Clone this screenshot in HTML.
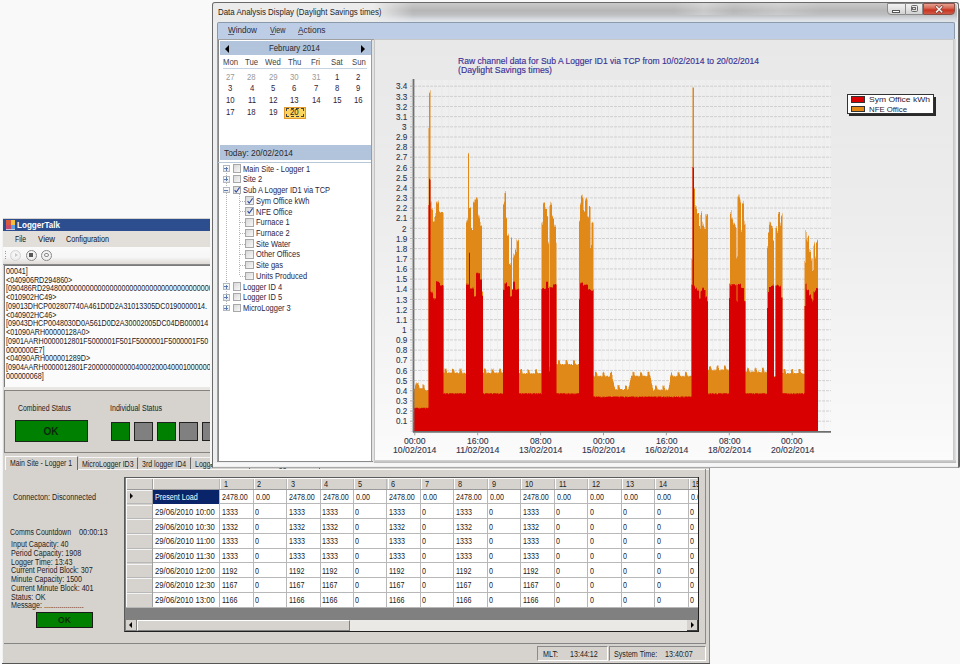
<!DOCTYPE html><html><head><meta charset="utf-8"><style>
html,body{margin:0;padding:0}
body{width:960px;height:664px;overflow:hidden;position:relative;background:#f9f9f9;font-family:"Liberation Sans",sans-serif}
div,span{position:absolute}
.t{white-space:nowrap;transform-origin:0 50%}
</style></head><body>
<div style="left:2px;top:218px;width:707.5px;height:446px;background:#d6d3ce;border-left:1px solid #f2f2f2;border-right:1px solid #858585;box-sizing:border-box"></div>
<div style="left:3px;top:218.5px;width:706px;height:12px;background:#2c4d8e"></div>
<div style="left:5.5px;top:219.8px;width:9.5px;height:10px;background:#c8c8d8"></div>
<div style="left:6px;top:220.3px;width:4.5px;height:4.5px;background:#d85a3a"></div>
<div style="left:10.5px;top:220.3px;width:4.5px;height:4.5px;background:#f2c040"></div>
<div style="left:6px;top:224.8px;width:4.5px;height:4.5px;background:#c84a6a"></div>
<div style="left:10.5px;top:224.8px;width:4.5px;height:4.5px;background:#5aa0e0"></div>
<span class="t" style="left:17.00px;top:220.46px;font-size:9.5px;line-height:9.5px;color:#fff;font-weight:bold;transform:scaleX(0.8516);">LoggerTalk</span>
<div style="left:3px;top:230.5px;width:706px;height:17px;background:#e2dfdb"></div>
<span class="t" style="left:15.00px;top:235.48px;font-size:8.5px;line-height:8.5px;color:#111;transform:scaleX(0.8032);">File</span>
<span class="t" style="left:38.00px;top:235.48px;font-size:8.5px;line-height:8.5px;color:#111;transform:scaleX(0.9305);">View</span>
<span class="t" style="left:66.00px;top:235.48px;font-size:8.5px;line-height:8.5px;color:#111;transform:scaleX(0.8505);">Configuration</span>
<div style="left:3px;top:247px;width:706px;height:17.5px;background:linear-gradient(#fafafa 0,#f6f6f6 60%,#dedad6 100%);border-bottom:1px solid #8a8a8a;box-sizing:border-box"></div>
<div style="left:5.2px;top:250.5px;width:1px;height:1px;background:#9a9a9a"></div>
<div style="left:5.2px;top:253.1px;width:1px;height:1px;background:#9a9a9a"></div>
<div style="left:5.2px;top:255.7px;width:1px;height:1px;background:#9a9a9a"></div>
<div style="left:5.2px;top:258.3px;width:1px;height:1px;background:#9a9a9a"></div>
<div style="left:10.2px;top:249.9px;width:10.8px;height:10.8px;border-radius:50%;border:1px solid #d4d4d4;background:radial-gradient(circle at 50% 40%,#fcfcfc,#e6e6e6);box-sizing:border-box"></div>
<div style="left:25.799999999999997px;top:249.9px;width:10.8px;height:10.8px;border-radius:50%;border:1px solid #8a8a8a;background:radial-gradient(circle at 50% 40%,#fcfcfc,#e6e6e6);box-sizing:border-box"></div>
<div style="left:41.2px;top:249.9px;width:10.8px;height:10.8px;border-radius:50%;border:1px solid #8a8a8a;background:radial-gradient(circle at 50% 40%,#fcfcfc,#e6e6e6);box-sizing:border-box"></div>
<div style="left:14.6px;top:253.3px;width:0px;height:0px;border-left:3px solid #c8c8c8;border-top:2px solid transparent;border-bottom:2px solid transparent;background:none"></div>
<div style="left:29.1px;top:253.2px;width:4.2px;height:4.2px;background:#575757"></div>
<div style="left:43.9px;top:252.6px;width:5.6px;height:4.2px;border:1px solid #8a8a8a;border-radius:2px;box-sizing:border-box"></div>
<div style="left:4px;top:264.5px;width:208px;height:123px;background:#fbfbfb;border-top:1px solid #7a7a7a;border-left:1px solid #7a7a7a;box-sizing:border-box"></div>
<span class="t" style="left:6.00px;top:266.93px;font-size:8.6px;line-height:8.6px;color:#202020;transform:scaleX(0.8300);">00041]</span>
<span class="t" style="left:6.00px;top:275.68px;font-size:8.6px;line-height:8.6px;color:#202020;transform:scaleX(0.8300);">&lt;040906RD294860&gt;</span>
<span class="t" style="left:6.00px;top:284.43px;font-size:8.6px;line-height:8.6px;color:#202020;transform:scaleX(0.8300);">[090486RD2948000000000000000000000000000000000000000000</span>
<span class="t" style="left:6.00px;top:293.18px;font-size:8.6px;line-height:8.6px;color:#202020;transform:scaleX(0.8300);">&lt;010902HC49&gt;</span>
<span class="t" style="left:6.00px;top:301.93px;font-size:8.6px;line-height:8.6px;color:#202020;transform:scaleX(0.8300);">[09013DHCP002807740A461D0D2A31013305DC0190000014.</span>
<span class="t" style="left:6.00px;top:310.68px;font-size:8.6px;line-height:8.6px;color:#202020;transform:scaleX(0.8300);">&lt;040902HC46&gt;</span>
<span class="t" style="left:6.00px;top:319.43px;font-size:8.6px;line-height:8.6px;color:#202020;transform:scaleX(0.8300);">[09043DHCP0048030D0A561D0D2A30002005DC04DB000014</span>
<span class="t" style="left:6.00px;top:328.18px;font-size:8.6px;line-height:8.6px;color:#202020;transform:scaleX(0.8300);">&lt;01090ARH00000128A0&gt;</span>
<span class="t" style="left:6.00px;top:336.93px;font-size:8.6px;line-height:8.6px;color:#202020;transform:scaleX(0.8300);">[0901AARH0000012801F5000001F501F5000001F5000001F50</span>
<span class="t" style="left:6.00px;top:345.68px;font-size:8.6px;line-height:8.6px;color:#202020;transform:scaleX(0.8300);">0000000E7]</span>
<span class="t" style="left:6.00px;top:354.43px;font-size:8.6px;line-height:8.6px;color:#202020;transform:scaleX(0.8300);">&lt;04090ARH000001289D&gt;</span>
<span class="t" style="left:6.00px;top:363.18px;font-size:8.6px;line-height:8.6px;color:#202020;transform:scaleX(0.8300);">[0904AARH0000012801F2000000000004000200040001000000</span>
<span class="t" style="left:6.00px;top:371.93px;font-size:8.6px;line-height:8.6px;color:#202020;transform:scaleX(0.8300);">000000068]</span>
<div style="left:3.5px;top:387px;width:208px;height:3px;background:#e9e7e4"></div>
<div style="left:3.5px;top:390px;width:210px;height:63px;border:1px solid #858280;border-right:none;box-sizing:border-box"></div>
<span class="t" style="left:17.80px;top:404.28px;font-size:8.5px;line-height:8.5px;color:#222;transform:scaleX(0.8129);">Combined Status</span>
<span class="t" style="left:109.60px;top:404.08px;font-size:8.5px;line-height:8.5px;color:#222;transform:scaleX(0.8338);">Individual Status</span>
<div style="left:14.6px;top:420px;width:73px;height:22px;background:#008000;border:1px solid #1a2a1a;box-sizing:border-box"></div>
<span class="t" style="left:43.50px;top:427.20px;font-size:10px;line-height:10px;color:#0a2a0a;font-weight:bold;transform:scaleX(1.0000);">OK</span>
<div style="left:111.3px;top:422px;width:19px;height:18.5px;background:#008000;border:1px solid #222;box-sizing:border-box"></div>
<div style="left:134.0px;top:422px;width:19px;height:18.5px;background:#808080;border:1px solid #222;box-sizing:border-box"></div>
<div style="left:156.7px;top:422px;width:19px;height:18.5px;background:#008000;border:1px solid #222;box-sizing:border-box"></div>
<div style="left:179.39999999999998px;top:422px;width:19px;height:18.5px;background:#808080;border:1px solid #222;box-sizing:border-box"></div>
<div style="left:202.1px;top:422px;width:19px;height:18.5px;background:#808080;border:1px solid #222;box-sizing:border-box"></div>
<div style="left:3px;top:454px;width:706px;height:16px;background:#d6d3ce"></div>
<div style="left:5px;top:455.7px;width:73px;height:14px;background:#d6d3ce;border-top:1px solid #fafafa;border-left:1px solid #fafafa;border-right:1.2px solid #6a6a6a;box-sizing:border-box"></div>
<span class="t" style="left:10.00px;top:459.28px;font-size:8.5px;line-height:8.5px;color:#222;transform:scaleX(0.8101);">Main Site - Logger 1</span>
<div style="left:79px;top:456.8px;width:59px;height:12.5px;border-top:1px solid #f4f4f4;border-right:1.2px solid #6a6a6a;box-sizing:border-box"></div>
<span class="t" style="left:81.50px;top:460.38px;font-size:8.5px;line-height:8.5px;color:#222;transform:scaleX(0.8200);">MicroLogger ID3</span>
<div style="left:139px;top:456.8px;width:52px;height:12.5px;border-top:1px solid #f4f4f4;border-right:1.2px solid #6a6a6a;box-sizing:border-box"></div>
<span class="t" style="left:141.50px;top:460.38px;font-size:8.5px;line-height:8.5px;color:#222;transform:scaleX(0.8200);">3rd logger ID4</span>
<div style="left:192px;top:456.8px;width:58px;height:12.5px;border-top:1px solid #f4f4f4;border-right:1.2px solid #6a6a6a;box-sizing:border-box"></div>
<span class="t" style="left:194.50px;top:460.38px;font-size:8.5px;line-height:8.5px;color:#222;transform:scaleX(0.8200);">Logger ID5</span>
<div style="left:251px;top:456.8px;width:69px;height:12.5px;border-top:1px solid #f4f4f4;border-right:1.2px solid #6a6a6a;box-sizing:border-box"></div>
<span class="t" style="left:253.50px;top:460.38px;font-size:8.5px;line-height:8.5px;color:#222;transform:scaleX(0.8200);">MicroLogger</span>
<div style="left:78px;top:469px;width:631px;height:1px;background:#f8f8f8"></div>
<div style="left:704.9px;top:469px;width:1px;height:174px;background:#8a8a8a"></div>
<span class="t" style="left:13.00px;top:492.68px;font-size:8.5px;line-height:8.5px;color:#222;transform:scaleX(0.8527);">Connecton: Disconnected</span>
<span class="t" style="left:9.50px;top:528.18px;font-size:8.5px;line-height:8.5px;color:#222;transform:scaleX(0.8173);">Comms Countdown</span>
<span class="t" style="left:79.00px;top:528.18px;font-size:8.5px;line-height:8.5px;color:#222;transform:scaleX(0.8615);">00:00:13</span>
<span class="t" style="left:10.50px;top:540.18px;font-size:8.5px;line-height:8.5px;color:#222;transform:scaleX(0.8400);">Input Capacity: 40</span>
<span class="t" style="left:10.50px;top:548.91px;font-size:8.5px;line-height:8.5px;color:#222;transform:scaleX(0.8400);">Period Capacity: 1908</span>
<span class="t" style="left:10.50px;top:557.64px;font-size:8.5px;line-height:8.5px;color:#222;transform:scaleX(0.8400);">Logger Time: 13:43</span>
<span class="t" style="left:10.50px;top:566.37px;font-size:8.5px;line-height:8.5px;color:#222;transform:scaleX(0.8400);">Current Period Block: 307</span>
<span class="t" style="left:10.50px;top:575.10px;font-size:8.5px;line-height:8.5px;color:#222;transform:scaleX(0.8400);">Minute Capacity: 1500</span>
<span class="t" style="left:10.50px;top:583.83px;font-size:8.5px;line-height:8.5px;color:#222;transform:scaleX(0.8400);">Current Minute Block: 401</span>
<span class="t" style="left:10.50px;top:592.56px;font-size:8.5px;line-height:8.5px;color:#222;transform:scaleX(0.8400);">Status: OK</span>
<span class="t" style="left:10.50px;top:601.29px;font-size:8.5px;line-height:8.5px;color:#222;transform:scaleX(0.8400);">Message: ....................</span>
<div style="left:35.8px;top:611.5px;width:57px;height:16.5px;background:#008000;border:1px solid #1a1a1a;box-sizing:border-box"></div>
<span class="t" style="left:57.89px;top:616.22px;font-size:9px;line-height:9px;color:#0a2a0a;font-weight:bold;transform:scaleX(0.9500);">OK</span>
<div style="left:124.3px;top:476.7px;width:574.7px;height:155px;background:#808080;border-top:1.5px solid #5a5a5a;border-left:1.5px solid #5a5a5a;border-right:1px solid #fff;border-bottom:1px solid #202020;box-sizing:border-box"></div>
<div style="left:126px;top:478px;width:572px;height:11.2px;background:#d6d3ce"></div>
<div style="left:126px;top:478px;width:26.3px;height:129px;background:#d6d3ce"></div>
<div style="left:152.3px;top:489.2px;width:546px;height:117.8px;background:#fff"></div>
<div style="left:126px;top:503.43px;width:572px;height:1px;background:#b8b8b8"></div>
<div style="left:126px;top:518.16px;width:572px;height:1px;background:#b8b8b8"></div>
<div style="left:126px;top:532.89px;width:572px;height:1px;background:#b8b8b8"></div>
<div style="left:126px;top:547.62px;width:572px;height:1px;background:#b8b8b8"></div>
<div style="left:126px;top:562.35px;width:572px;height:1px;background:#b8b8b8"></div>
<div style="left:126px;top:577.0799999999999px;width:572px;height:1px;background:#b8b8b8"></div>
<div style="left:126px;top:591.81px;width:572px;height:1px;background:#b8b8b8"></div>
<div style="left:126px;top:606.54px;width:572px;height:1px;background:#b8b8b8"></div>
<div style="left:219.1px;top:478px;width:1px;height:129px;background:#b8b8b8"></div>
<div style="left:252.57px;top:478px;width:1px;height:129px;background:#b8b8b8"></div>
<div style="left:286.03999999999996px;top:478px;width:1px;height:129px;background:#b8b8b8"></div>
<div style="left:319.51px;top:478px;width:1px;height:129px;background:#b8b8b8"></div>
<div style="left:352.98px;top:478px;width:1px;height:129px;background:#b8b8b8"></div>
<div style="left:386.45px;top:478px;width:1px;height:129px;background:#b8b8b8"></div>
<div style="left:419.91999999999996px;top:478px;width:1px;height:129px;background:#b8b8b8"></div>
<div style="left:453.39px;top:478px;width:1px;height:129px;background:#b8b8b8"></div>
<div style="left:486.86px;top:478px;width:1px;height:129px;background:#b8b8b8"></div>
<div style="left:520.33px;top:478px;width:1px;height:129px;background:#b8b8b8"></div>
<div style="left:553.8px;top:478px;width:1px;height:129px;background:#b8b8b8"></div>
<div style="left:587.27px;top:478px;width:1px;height:129px;background:#b8b8b8"></div>
<div style="left:620.74px;top:478px;width:1px;height:129px;background:#b8b8b8"></div>
<div style="left:654.21px;top:478px;width:1px;height:129px;background:#b8b8b8"></div>
<div style="left:687.68px;top:478px;width:1px;height:129px;background:#b8b8b8"></div>
<div style="left:152px;top:478px;width:1px;height:129px;background:#a0a0a0"></div>
<div style="left:126px;top:488.7px;width:572px;height:1px;background:#9a9a9a"></div>
<div style="left:152.8px;top:489.5px;width:66.5px;height:14.3px;background:#0a246a"></div>
<span class="t" style="left:155.00px;top:493.28px;font-size:8.5px;line-height:8.5px;color:#fff;transform:scaleX(0.8465);">Present Load</span>
<div style="left:129.5px;top:493.3px;width:0;height:0;border-left:3.5px solid #0a0a0a;border-top:3.2px solid transparent;border-bottom:3.2px solid transparent"></div>
<div style="left:126.2px;top:489.9px;width:25.6px;height:0.7px;background:#f4f4f4"></div>
<div style="left:126.2px;top:504.63px;width:25.6px;height:0.7px;background:#f4f4f4"></div>
<div style="left:126.2px;top:519.36px;width:25.6px;height:0.7px;background:#f4f4f4"></div>
<div style="left:126.2px;top:534.09px;width:25.6px;height:0.7px;background:#f4f4f4"></div>
<div style="left:126.2px;top:548.82px;width:25.6px;height:0.7px;background:#f4f4f4"></div>
<div style="left:126.2px;top:563.5500000000001px;width:25.6px;height:0.7px;background:#f4f4f4"></div>
<div style="left:126.2px;top:578.28px;width:25.6px;height:0.7px;background:#f4f4f4"></div>
<div style="left:126.2px;top:593.01px;width:25.6px;height:0.7px;background:#f4f4f4"></div>
<div style="left:126.2px;top:478px;width:0.8px;height:129px;background:#fbfbfb"></div>
<div style="left:152.9px;top:478px;width:0.8px;height:10.5px;background:#fbfbfb"></div>
<div style="left:220.2px;top:478px;width:0.8px;height:10.5px;background:#fbfbfb"></div>
<div style="left:253.67px;top:478px;width:0.8px;height:10.5px;background:#fbfbfb"></div>
<div style="left:287.14px;top:478px;width:0.8px;height:10.5px;background:#fbfbfb"></div>
<div style="left:320.61px;top:478px;width:0.8px;height:10.5px;background:#fbfbfb"></div>
<div style="left:354.08000000000004px;top:478px;width:0.8px;height:10.5px;background:#fbfbfb"></div>
<div style="left:387.55px;top:478px;width:0.8px;height:10.5px;background:#fbfbfb"></div>
<div style="left:421.02px;top:478px;width:0.8px;height:10.5px;background:#fbfbfb"></div>
<div style="left:454.49px;top:478px;width:0.8px;height:10.5px;background:#fbfbfb"></div>
<div style="left:487.96000000000004px;top:478px;width:0.8px;height:10.5px;background:#fbfbfb"></div>
<div style="left:521.4300000000001px;top:478px;width:0.8px;height:10.5px;background:#fbfbfb"></div>
<div style="left:554.9px;top:478px;width:0.8px;height:10.5px;background:#fbfbfb"></div>
<div style="left:588.37px;top:478px;width:0.8px;height:10.5px;background:#fbfbfb"></div>
<div style="left:621.84px;top:478px;width:0.8px;height:10.5px;background:#fbfbfb"></div>
<div style="left:655.3100000000001px;top:478px;width:0.8px;height:10.5px;background:#fbfbfb"></div>
<div style="left:688.78px;top:478px;width:0.8px;height:10.5px;background:#fbfbfb"></div>
<div style="left:126.2px;top:478.1px;width:571px;height:0.8px;background:#fbfbfb"></div>
<span class="t" style="left:223.90px;top:480.08px;font-size:8.5px;line-height:8.5px;color:#222;transform:scaleX(0.8600);">1</span>
<span class="t" style="left:257.37px;top:480.08px;font-size:8.5px;line-height:8.5px;color:#222;transform:scaleX(0.8600);">2</span>
<span class="t" style="left:290.84px;top:480.08px;font-size:8.5px;line-height:8.5px;color:#222;transform:scaleX(0.8600);">3</span>
<span class="t" style="left:324.31px;top:480.08px;font-size:8.5px;line-height:8.5px;color:#222;transform:scaleX(0.8600);">4</span>
<span class="t" style="left:357.78px;top:480.08px;font-size:8.5px;line-height:8.5px;color:#222;transform:scaleX(0.8600);">5</span>
<span class="t" style="left:391.25px;top:480.08px;font-size:8.5px;line-height:8.5px;color:#222;transform:scaleX(0.8600);">6</span>
<span class="t" style="left:424.72px;top:480.08px;font-size:8.5px;line-height:8.5px;color:#222;transform:scaleX(0.8600);">7</span>
<span class="t" style="left:458.19px;top:480.08px;font-size:8.5px;line-height:8.5px;color:#222;transform:scaleX(0.8600);">8</span>
<span class="t" style="left:491.66px;top:480.08px;font-size:8.5px;line-height:8.5px;color:#222;transform:scaleX(0.8600);">9</span>
<span class="t" style="left:525.13px;top:480.08px;font-size:8.5px;line-height:8.5px;color:#222;transform:scaleX(0.8600);">10</span>
<span class="t" style="left:558.60px;top:480.08px;font-size:8.5px;line-height:8.5px;color:#222;transform:scaleX(0.8600);">11</span>
<span class="t" style="left:592.07px;top:480.08px;font-size:8.5px;line-height:8.5px;color:#222;transform:scaleX(0.8600);">12</span>
<span class="t" style="left:625.54px;top:480.08px;font-size:8.5px;line-height:8.5px;color:#222;transform:scaleX(0.8600);">13</span>
<span class="t" style="left:659.01px;top:480.08px;font-size:8.5px;line-height:8.5px;color:#222;transform:scaleX(0.8600);">14</span>
<span class="t" style="left:692.48px;top:480.08px;font-size:8.5px;line-height:8.5px;color:#222;transform:scaleX(0.8600);">15</span>
<span class="t" style="left:222.10px;top:493.28px;font-size:8.5px;line-height:8.5px;color:#222;transform:scaleX(0.8400);">2478.00</span>
<span class="t" style="left:255.57px;top:493.28px;font-size:8.5px;line-height:8.5px;color:#222;transform:scaleX(0.8400);">0.00</span>
<span class="t" style="left:289.04px;top:493.28px;font-size:8.5px;line-height:8.5px;color:#222;transform:scaleX(0.8400);">2478.00</span>
<span class="t" style="left:322.51px;top:493.28px;font-size:8.5px;line-height:8.5px;color:#222;transform:scaleX(0.8400);">2478.00</span>
<span class="t" style="left:355.98px;top:493.28px;font-size:8.5px;line-height:8.5px;color:#222;transform:scaleX(0.8400);">0.00</span>
<span class="t" style="left:389.45px;top:493.28px;font-size:8.5px;line-height:8.5px;color:#222;transform:scaleX(0.8400);">2478.00</span>
<span class="t" style="left:422.92px;top:493.28px;font-size:8.5px;line-height:8.5px;color:#222;transform:scaleX(0.8400);">0.00</span>
<span class="t" style="left:456.39px;top:493.28px;font-size:8.5px;line-height:8.5px;color:#222;transform:scaleX(0.8400);">2478.00</span>
<span class="t" style="left:489.86px;top:493.28px;font-size:8.5px;line-height:8.5px;color:#222;transform:scaleX(0.8400);">0.00</span>
<span class="t" style="left:523.33px;top:493.28px;font-size:8.5px;line-height:8.5px;color:#222;transform:scaleX(0.8400);">2478.00</span>
<span class="t" style="left:556.80px;top:493.28px;font-size:8.5px;line-height:8.5px;color:#222;transform:scaleX(0.8400);">0.00</span>
<span class="t" style="left:590.27px;top:493.28px;font-size:8.5px;line-height:8.5px;color:#222;transform:scaleX(0.8400);">0.00</span>
<span class="t" style="left:623.74px;top:493.28px;font-size:8.5px;line-height:8.5px;color:#222;transform:scaleX(0.8400);">0.00</span>
<span class="t" style="left:657.21px;top:493.28px;font-size:8.5px;line-height:8.5px;color:#222;transform:scaleX(0.8400);">0.00</span>
<span class="t" style="left:690.68px;top:493.28px;font-size:8.5px;line-height:8.5px;color:#222;transform:scaleX(0.8400);">0.00</span>
<span class="t" style="left:154.80px;top:507.81px;font-size:8.5px;line-height:8.5px;color:#222;transform:scaleX(0.9023);">29/06/2010 10:00</span>
<span class="t" style="left:221.60px;top:507.81px;font-size:8.5px;line-height:8.5px;color:#222;transform:scaleX(0.8400);">1333</span>
<span class="t" style="left:255.07px;top:507.81px;font-size:8.5px;line-height:8.5px;color:#222;transform:scaleX(0.8400);">0</span>
<span class="t" style="left:288.54px;top:507.81px;font-size:8.5px;line-height:8.5px;color:#222;transform:scaleX(0.8400);">1333</span>
<span class="t" style="left:322.01px;top:507.81px;font-size:8.5px;line-height:8.5px;color:#222;transform:scaleX(0.8400);">1333</span>
<span class="t" style="left:355.48px;top:507.81px;font-size:8.5px;line-height:8.5px;color:#222;transform:scaleX(0.8400);">0</span>
<span class="t" style="left:388.95px;top:507.81px;font-size:8.5px;line-height:8.5px;color:#222;transform:scaleX(0.8400);">1333</span>
<span class="t" style="left:422.42px;top:507.81px;font-size:8.5px;line-height:8.5px;color:#222;transform:scaleX(0.8400);">0</span>
<span class="t" style="left:455.89px;top:507.81px;font-size:8.5px;line-height:8.5px;color:#222;transform:scaleX(0.8400);">1333</span>
<span class="t" style="left:489.36px;top:507.81px;font-size:8.5px;line-height:8.5px;color:#222;transform:scaleX(0.8400);">0</span>
<span class="t" style="left:522.83px;top:507.81px;font-size:8.5px;line-height:8.5px;color:#222;transform:scaleX(0.8400);">1333</span>
<span class="t" style="left:556.30px;top:507.81px;font-size:8.5px;line-height:8.5px;color:#222;transform:scaleX(0.8400);">0</span>
<span class="t" style="left:589.77px;top:507.81px;font-size:8.5px;line-height:8.5px;color:#222;transform:scaleX(0.8400);">0</span>
<span class="t" style="left:623.24px;top:507.81px;font-size:8.5px;line-height:8.5px;color:#222;transform:scaleX(0.8400);">0</span>
<span class="t" style="left:656.71px;top:507.81px;font-size:8.5px;line-height:8.5px;color:#222;transform:scaleX(0.8400);">0</span>
<span class="t" style="left:690.18px;top:507.81px;font-size:8.5px;line-height:8.5px;color:#222;transform:scaleX(0.8400);">0</span>
<span class="t" style="left:154.80px;top:522.54px;font-size:8.5px;line-height:8.5px;color:#222;transform:scaleX(0.9023);">29/06/2010 10:30</span>
<span class="t" style="left:221.60px;top:522.54px;font-size:8.5px;line-height:8.5px;color:#222;transform:scaleX(0.8400);">1332</span>
<span class="t" style="left:255.07px;top:522.54px;font-size:8.5px;line-height:8.5px;color:#222;transform:scaleX(0.8400);">0</span>
<span class="t" style="left:288.54px;top:522.54px;font-size:8.5px;line-height:8.5px;color:#222;transform:scaleX(0.8400);">1332</span>
<span class="t" style="left:322.01px;top:522.54px;font-size:8.5px;line-height:8.5px;color:#222;transform:scaleX(0.8400);">1332</span>
<span class="t" style="left:355.48px;top:522.54px;font-size:8.5px;line-height:8.5px;color:#222;transform:scaleX(0.8400);">0</span>
<span class="t" style="left:388.95px;top:522.54px;font-size:8.5px;line-height:8.5px;color:#222;transform:scaleX(0.8400);">1332</span>
<span class="t" style="left:422.42px;top:522.54px;font-size:8.5px;line-height:8.5px;color:#222;transform:scaleX(0.8400);">0</span>
<span class="t" style="left:455.89px;top:522.54px;font-size:8.5px;line-height:8.5px;color:#222;transform:scaleX(0.8400);">1332</span>
<span class="t" style="left:489.36px;top:522.54px;font-size:8.5px;line-height:8.5px;color:#222;transform:scaleX(0.8400);">0</span>
<span class="t" style="left:522.83px;top:522.54px;font-size:8.5px;line-height:8.5px;color:#222;transform:scaleX(0.8400);">1332</span>
<span class="t" style="left:556.30px;top:522.54px;font-size:8.5px;line-height:8.5px;color:#222;transform:scaleX(0.8400);">0</span>
<span class="t" style="left:589.77px;top:522.54px;font-size:8.5px;line-height:8.5px;color:#222;transform:scaleX(0.8400);">0</span>
<span class="t" style="left:623.24px;top:522.54px;font-size:8.5px;line-height:8.5px;color:#222;transform:scaleX(0.8400);">0</span>
<span class="t" style="left:656.71px;top:522.54px;font-size:8.5px;line-height:8.5px;color:#222;transform:scaleX(0.8400);">0</span>
<span class="t" style="left:690.18px;top:522.54px;font-size:8.5px;line-height:8.5px;color:#222;transform:scaleX(0.8400);">0</span>
<span class="t" style="left:154.80px;top:537.27px;font-size:8.5px;line-height:8.5px;color:#222;transform:scaleX(0.9109);">29/06/2010 11:00</span>
<span class="t" style="left:221.60px;top:537.27px;font-size:8.5px;line-height:8.5px;color:#222;transform:scaleX(0.8400);">1333</span>
<span class="t" style="left:255.07px;top:537.27px;font-size:8.5px;line-height:8.5px;color:#222;transform:scaleX(0.8400);">0</span>
<span class="t" style="left:288.54px;top:537.27px;font-size:8.5px;line-height:8.5px;color:#222;transform:scaleX(0.8400);">1333</span>
<span class="t" style="left:322.01px;top:537.27px;font-size:8.5px;line-height:8.5px;color:#222;transform:scaleX(0.8400);">1333</span>
<span class="t" style="left:355.48px;top:537.27px;font-size:8.5px;line-height:8.5px;color:#222;transform:scaleX(0.8400);">0</span>
<span class="t" style="left:388.95px;top:537.27px;font-size:8.5px;line-height:8.5px;color:#222;transform:scaleX(0.8400);">1333</span>
<span class="t" style="left:422.42px;top:537.27px;font-size:8.5px;line-height:8.5px;color:#222;transform:scaleX(0.8400);">0</span>
<span class="t" style="left:455.89px;top:537.27px;font-size:8.5px;line-height:8.5px;color:#222;transform:scaleX(0.8400);">1333</span>
<span class="t" style="left:489.36px;top:537.27px;font-size:8.5px;line-height:8.5px;color:#222;transform:scaleX(0.8400);">0</span>
<span class="t" style="left:522.83px;top:537.27px;font-size:8.5px;line-height:8.5px;color:#222;transform:scaleX(0.8400);">1333</span>
<span class="t" style="left:556.30px;top:537.27px;font-size:8.5px;line-height:8.5px;color:#222;transform:scaleX(0.8400);">0</span>
<span class="t" style="left:589.77px;top:537.27px;font-size:8.5px;line-height:8.5px;color:#222;transform:scaleX(0.8400);">0</span>
<span class="t" style="left:623.24px;top:537.27px;font-size:8.5px;line-height:8.5px;color:#222;transform:scaleX(0.8400);">0</span>
<span class="t" style="left:656.71px;top:537.27px;font-size:8.5px;line-height:8.5px;color:#222;transform:scaleX(0.8400);">0</span>
<span class="t" style="left:690.18px;top:537.27px;font-size:8.5px;line-height:8.5px;color:#222;transform:scaleX(0.8400);">0</span>
<span class="t" style="left:154.80px;top:552.00px;font-size:8.5px;line-height:8.5px;color:#222;transform:scaleX(0.9109);">29/06/2010 11:30</span>
<span class="t" style="left:221.60px;top:552.00px;font-size:8.5px;line-height:8.5px;color:#222;transform:scaleX(0.8400);">1333</span>
<span class="t" style="left:255.07px;top:552.00px;font-size:8.5px;line-height:8.5px;color:#222;transform:scaleX(0.8400);">0</span>
<span class="t" style="left:288.54px;top:552.00px;font-size:8.5px;line-height:8.5px;color:#222;transform:scaleX(0.8400);">1333</span>
<span class="t" style="left:322.01px;top:552.00px;font-size:8.5px;line-height:8.5px;color:#222;transform:scaleX(0.8400);">1333</span>
<span class="t" style="left:355.48px;top:552.00px;font-size:8.5px;line-height:8.5px;color:#222;transform:scaleX(0.8400);">0</span>
<span class="t" style="left:388.95px;top:552.00px;font-size:8.5px;line-height:8.5px;color:#222;transform:scaleX(0.8400);">1333</span>
<span class="t" style="left:422.42px;top:552.00px;font-size:8.5px;line-height:8.5px;color:#222;transform:scaleX(0.8400);">0</span>
<span class="t" style="left:455.89px;top:552.00px;font-size:8.5px;line-height:8.5px;color:#222;transform:scaleX(0.8400);">1333</span>
<span class="t" style="left:489.36px;top:552.00px;font-size:8.5px;line-height:8.5px;color:#222;transform:scaleX(0.8400);">0</span>
<span class="t" style="left:522.83px;top:552.00px;font-size:8.5px;line-height:8.5px;color:#222;transform:scaleX(0.8400);">1333</span>
<span class="t" style="left:556.30px;top:552.00px;font-size:8.5px;line-height:8.5px;color:#222;transform:scaleX(0.8400);">0</span>
<span class="t" style="left:589.77px;top:552.00px;font-size:8.5px;line-height:8.5px;color:#222;transform:scaleX(0.8400);">0</span>
<span class="t" style="left:623.24px;top:552.00px;font-size:8.5px;line-height:8.5px;color:#222;transform:scaleX(0.8400);">0</span>
<span class="t" style="left:656.71px;top:552.00px;font-size:8.5px;line-height:8.5px;color:#222;transform:scaleX(0.8400);">0</span>
<span class="t" style="left:690.18px;top:552.00px;font-size:8.5px;line-height:8.5px;color:#222;transform:scaleX(0.8400);">0</span>
<span class="t" style="left:154.80px;top:566.73px;font-size:8.5px;line-height:8.5px;color:#222;transform:scaleX(0.9023);">29/06/2010 12:00</span>
<span class="t" style="left:221.60px;top:566.73px;font-size:8.5px;line-height:8.5px;color:#222;transform:scaleX(0.8400);">1192</span>
<span class="t" style="left:255.07px;top:566.73px;font-size:8.5px;line-height:8.5px;color:#222;transform:scaleX(0.8400);">0</span>
<span class="t" style="left:288.54px;top:566.73px;font-size:8.5px;line-height:8.5px;color:#222;transform:scaleX(0.8400);">1192</span>
<span class="t" style="left:322.01px;top:566.73px;font-size:8.5px;line-height:8.5px;color:#222;transform:scaleX(0.8400);">1192</span>
<span class="t" style="left:355.48px;top:566.73px;font-size:8.5px;line-height:8.5px;color:#222;transform:scaleX(0.8400);">0</span>
<span class="t" style="left:388.95px;top:566.73px;font-size:8.5px;line-height:8.5px;color:#222;transform:scaleX(0.8400);">1192</span>
<span class="t" style="left:422.42px;top:566.73px;font-size:8.5px;line-height:8.5px;color:#222;transform:scaleX(0.8400);">0</span>
<span class="t" style="left:455.89px;top:566.73px;font-size:8.5px;line-height:8.5px;color:#222;transform:scaleX(0.8400);">1192</span>
<span class="t" style="left:489.36px;top:566.73px;font-size:8.5px;line-height:8.5px;color:#222;transform:scaleX(0.8400);">0</span>
<span class="t" style="left:522.83px;top:566.73px;font-size:8.5px;line-height:8.5px;color:#222;transform:scaleX(0.8400);">1192</span>
<span class="t" style="left:556.30px;top:566.73px;font-size:8.5px;line-height:8.5px;color:#222;transform:scaleX(0.8400);">0</span>
<span class="t" style="left:589.77px;top:566.73px;font-size:8.5px;line-height:8.5px;color:#222;transform:scaleX(0.8400);">0</span>
<span class="t" style="left:623.24px;top:566.73px;font-size:8.5px;line-height:8.5px;color:#222;transform:scaleX(0.8400);">0</span>
<span class="t" style="left:656.71px;top:566.73px;font-size:8.5px;line-height:8.5px;color:#222;transform:scaleX(0.8400);">0</span>
<span class="t" style="left:690.18px;top:566.73px;font-size:8.5px;line-height:8.5px;color:#222;transform:scaleX(0.8400);">0</span>
<span class="t" style="left:154.80px;top:581.46px;font-size:8.5px;line-height:8.5px;color:#222;transform:scaleX(0.9023);">29/06/2010 12:30</span>
<span class="t" style="left:221.60px;top:581.46px;font-size:8.5px;line-height:8.5px;color:#222;transform:scaleX(0.8400);">1167</span>
<span class="t" style="left:255.07px;top:581.46px;font-size:8.5px;line-height:8.5px;color:#222;transform:scaleX(0.8400);">0</span>
<span class="t" style="left:288.54px;top:581.46px;font-size:8.5px;line-height:8.5px;color:#222;transform:scaleX(0.8400);">1167</span>
<span class="t" style="left:322.01px;top:581.46px;font-size:8.5px;line-height:8.5px;color:#222;transform:scaleX(0.8400);">1167</span>
<span class="t" style="left:355.48px;top:581.46px;font-size:8.5px;line-height:8.5px;color:#222;transform:scaleX(0.8400);">0</span>
<span class="t" style="left:388.95px;top:581.46px;font-size:8.5px;line-height:8.5px;color:#222;transform:scaleX(0.8400);">1167</span>
<span class="t" style="left:422.42px;top:581.46px;font-size:8.5px;line-height:8.5px;color:#222;transform:scaleX(0.8400);">0</span>
<span class="t" style="left:455.89px;top:581.46px;font-size:8.5px;line-height:8.5px;color:#222;transform:scaleX(0.8400);">1167</span>
<span class="t" style="left:489.36px;top:581.46px;font-size:8.5px;line-height:8.5px;color:#222;transform:scaleX(0.8400);">0</span>
<span class="t" style="left:522.83px;top:581.46px;font-size:8.5px;line-height:8.5px;color:#222;transform:scaleX(0.8400);">1167</span>
<span class="t" style="left:556.30px;top:581.46px;font-size:8.5px;line-height:8.5px;color:#222;transform:scaleX(0.8400);">0</span>
<span class="t" style="left:589.77px;top:581.46px;font-size:8.5px;line-height:8.5px;color:#222;transform:scaleX(0.8400);">0</span>
<span class="t" style="left:623.24px;top:581.46px;font-size:8.5px;line-height:8.5px;color:#222;transform:scaleX(0.8400);">0</span>
<span class="t" style="left:656.71px;top:581.46px;font-size:8.5px;line-height:8.5px;color:#222;transform:scaleX(0.8400);">0</span>
<span class="t" style="left:690.18px;top:581.46px;font-size:8.5px;line-height:8.5px;color:#222;transform:scaleX(0.8400);">0</span>
<span class="t" style="left:154.80px;top:596.19px;font-size:8.5px;line-height:8.5px;color:#222;transform:scaleX(0.9023);">29/06/2010 13:00</span>
<span class="t" style="left:221.60px;top:596.19px;font-size:8.5px;line-height:8.5px;color:#222;transform:scaleX(0.8400);">1166</span>
<span class="t" style="left:255.07px;top:596.19px;font-size:8.5px;line-height:8.5px;color:#222;transform:scaleX(0.8400);">0</span>
<span class="t" style="left:288.54px;top:596.19px;font-size:8.5px;line-height:8.5px;color:#222;transform:scaleX(0.8400);">1166</span>
<span class="t" style="left:322.01px;top:596.19px;font-size:8.5px;line-height:8.5px;color:#222;transform:scaleX(0.8400);">1166</span>
<span class="t" style="left:355.48px;top:596.19px;font-size:8.5px;line-height:8.5px;color:#222;transform:scaleX(0.8400);">0</span>
<span class="t" style="left:388.95px;top:596.19px;font-size:8.5px;line-height:8.5px;color:#222;transform:scaleX(0.8400);">1166</span>
<span class="t" style="left:422.42px;top:596.19px;font-size:8.5px;line-height:8.5px;color:#222;transform:scaleX(0.8400);">0</span>
<span class="t" style="left:455.89px;top:596.19px;font-size:8.5px;line-height:8.5px;color:#222;transform:scaleX(0.8400);">1166</span>
<span class="t" style="left:489.36px;top:596.19px;font-size:8.5px;line-height:8.5px;color:#222;transform:scaleX(0.8400);">0</span>
<span class="t" style="left:522.83px;top:596.19px;font-size:8.5px;line-height:8.5px;color:#222;transform:scaleX(0.8400);">1166</span>
<span class="t" style="left:556.30px;top:596.19px;font-size:8.5px;line-height:8.5px;color:#222;transform:scaleX(0.8400);">0</span>
<span class="t" style="left:589.77px;top:596.19px;font-size:8.5px;line-height:8.5px;color:#222;transform:scaleX(0.8400);">0</span>
<span class="t" style="left:623.24px;top:596.19px;font-size:8.5px;line-height:8.5px;color:#222;transform:scaleX(0.8400);">0</span>
<span class="t" style="left:656.71px;top:596.19px;font-size:8.5px;line-height:8.5px;color:#222;transform:scaleX(0.8400);">0</span>
<span class="t" style="left:690.18px;top:596.19px;font-size:8.5px;line-height:8.5px;color:#222;transform:scaleX(0.8400);">0</span>
<div style="left:698.5px;top:477px;width:6.4px;height:160px;background:#d6d3ce"></div>
<div style="left:697.5px;top:477.2px;width:1.5px;height:154.5px;background:#202020"></div>
<div style="left:126px;top:619.5px;width:571.5px;height:11px;background:#ebe9e5"></div>
<div style="left:126px;top:619.5px;width:11px;height:11px;background:#d6d3ce;border-right:1px solid #808080;border-bottom:1px solid #808080;box-sizing:border-box"></div>
<div style="left:129px;top:622px;width:0;height:0;border-right:3px solid #000;border-top:3px solid transparent;border-bottom:3px solid transparent"></div>
<div style="left:137px;top:619.5px;width:213px;height:11px;background:#d6d3ce;border-right:1px solid #808080;border-bottom:1px solid #808080;border-left:1px solid #fff;border-top:1px solid #fff;box-sizing:border-box"></div>
<div style="left:686.5px;top:619.5px;width:11px;height:11px;background:#d6d3ce;border-right:1px solid #404040;border-bottom:1px solid #404040;box-sizing:border-box"></div>
<div style="left:691px;top:622px;width:0;height:0;border-left:3px solid #000;border-top:3px solid transparent;border-bottom:3px solid transparent"></div>
<div style="left:4.3px;top:642.7px;width:701.6px;height:1px;background:#858585"></div>
<div style="left:2px;top:663px;width:707.5px;height:1px;background:#555"></div>
<div style="left:537px;top:646px;width:71px;height:15px;border:1px solid #8a8a8a;border-right-color:#fff;border-bottom-color:#fff;box-sizing:border-box"></div>
<span class="t" style="left:543.00px;top:649.98px;font-size:8.5px;line-height:8.5px;color:#222;transform:scaleX(0.8400);">MLT:</span>
<span class="t" style="left:570.00px;top:649.98px;font-size:8.5px;line-height:8.5px;color:#222;transform:scaleX(0.8400);">13:44:12</span>
<div style="left:609px;top:646px;width:97px;height:15px;border:1px solid #8a8a8a;border-right-color:#fff;border-bottom-color:#fff;box-sizing:border-box"></div>
<span class="t" style="left:614.00px;top:649.98px;font-size:8.5px;line-height:8.5px;color:#222;transform:scaleX(0.8400);">System Time:</span>
<span class="t" style="left:665.00px;top:649.98px;font-size:8.5px;line-height:8.5px;color:#222;transform:scaleX(0.8400);">13:40:07</span>
<div style="left:209.8px;top:218px;width:2.2px;height:246px;background:#f6f6f6"></div>
<div style="left:957px;top:8px;width:2.5px;height:459.5px;background:rgba(40,40,40,0.75);border-radius:0 2px 2px 0"></div>
<div style="left:211.5px;top:2px;width:747px;height:465.5px;background:#eceef0;border:1px solid #6a6a6a;border-bottom-color:#a8a8a8;border-radius:3px 3px 0 0;box-sizing:border-box"></div>
<div style="left:212.5px;top:3px;width:744.5px;height:19px;background:linear-gradient(#c9c9c9 0%,#b6b6b6 40%,#bdbfc1 62%,#d8dce1 85%,#e3e7ec 100%);border-radius:4px 4px 0 0"></div>
<div style="left:212.5px;top:3px;width:744.5px;height:12px;background:linear-gradient(90deg,rgba(255,255,255,0) 0%,rgba(255,255,255,0) 62%,rgba(255,255,255,0.25) 66%,rgba(255,255,255,0) 70%,rgba(255,255,255,0.2) 76%,rgba(255,255,255,0) 82%)"></div>
<div style="left:212.5px;top:3px;width:200px;height:19px;background:linear-gradient(90deg,#ebebeb 0%,#ececec 80%,rgba(236,236,236,0) 100%);border-radius:4px 0 0 0"></div>
<span class="t" style="left:217.50px;top:8.22px;font-size:9px;line-height:9px;color:#1e1e1e;transform:scaleX(0.8787);">Data Analysis Display (Daylight Savings times)</span>
<div style="left:886.5px;top:3px;width:19px;height:11.5px;background:linear-gradient(#f2f2f2,#d2d2d2);border:1px solid #8a8a8a;border-radius:0 0 0 4px;box-sizing:border-box"></div>
<div style="left:892px;top:10px;width:8px;height:2.5px;background:#fff;border:1px solid #555;box-sizing:border-box"></div>
<div style="left:905.5px;top:3px;width:17.5px;height:11.5px;background:linear-gradient(#f2f2f2,#d2d2d2);border:1px solid #8a8a8a;border-left:none;box-sizing:border-box"></div>
<div style="left:910.5px;top:5.3px;width:7.5px;height:6.5px;border:1px solid #6a6a6a;border-radius:1.5px;box-sizing:border-box"></div>
<div style="left:912.3px;top:7.3px;width:4px;height:2.5px;border:0.8px solid #6a6a6a;box-sizing:border-box"></div>
<div style="left:923px;top:3px;width:32px;height:11.5px;background:linear-gradient(#e6a090,#d86a58 40%,#c83420 60%,#d05a48);border:1px solid #8a5048;border-radius:0 0 4px 0;box-sizing:border-box"></div>
<svg style="position:absolute;left:934px;top:4.5px" width="10" height="9" viewBox="0 0 10 9"><path d="M2.6,1.8 L7.6,6.8 M7.6,1.8 L2.6,6.8" stroke="#7a3a30" stroke-width="2.8" stroke-linecap="square"/><path d="M2.6,1.8 L7.6,6.8 M7.6,1.8 L2.6,6.8" stroke="#f2ecea" stroke-width="1.6" stroke-linecap="square"/></svg>
<div style="left:216.5px;top:22px;width:738.5px;height:16.5px;background:#bccde5;border:1px solid #8a9aab;border-bottom:none;border-radius:2px 2px 0 0;box-sizing:border-box"></div>
<span class="t" style="left:228.00px;top:26.32px;font-size:9px;line-height:9px;color:#2a2a3a;transform:scaleX(0.9060);text-decoration:underline;text-decoration-color:transparent">Window</span>
<div style="left:228px;top:34.3px;width:5.5px;height:0.7px;background:#667"></div>
<span class="t" style="left:269.50px;top:26.32px;font-size:9px;line-height:9px;color:#2a2a3a;transform:scaleX(0.8013);">View</span>
<div style="left:269.5px;top:34.3px;width:5px;height:0.7px;background:#667"></div>
<span class="t" style="left:297.50px;top:26.32px;font-size:9px;line-height:9px;color:#2a2a3a;transform:scaleX(0.9318);">Actions</span>
<div style="left:297.5px;top:34.3px;width:5px;height:0.7px;background:#667"></div>
<div style="left:216.5px;top:38.5px;width:738.5px;height:423.5px;background:#a0a0a0"></div>
<div style="left:217.5px;top:39.5px;width:154.5px;height:422px;background:#fff;border-left:1px solid #888;box-sizing:border-box"></div>
<div style="left:220px;top:40.8px;width:150.5px;height:14.7px;background:#b1c4dc"></div>
<div style="left:224.5px;top:44.5px;width:0;height:0;border-right:4px solid #000;border-top:4px solid transparent;border-bottom:4px solid transparent"></div>
<div style="left:360.5px;top:44.5px;width:0;height:0;border-left:4px solid #000;border-top:4px solid transparent;border-bottom:4px solid transparent"></div>
<span class="t" style="left:268.90px;top:44.42px;font-size:9px;line-height:9px;color:#2a2a2a;transform:scaleX(0.8679);">February 2014</span>
<span class="t" style="left:222.87px;top:57.92px;font-size:9px;line-height:9px;color:#444;transform:scaleX(0.8600);">Mon</span>
<span class="t" style="left:245.25px;top:57.92px;font-size:9px;line-height:9px;color:#444;transform:scaleX(0.8600);">Tue</span>
<span class="t" style="left:265.25px;top:57.92px;font-size:9px;line-height:9px;color:#444;transform:scaleX(0.8600);">Wed</span>
<span class="t" style="left:287.84px;top:57.92px;font-size:9px;line-height:9px;color:#444;transform:scaleX(0.8600);">Thu</span>
<span class="t" style="left:311.37px;top:57.92px;font-size:9px;line-height:9px;color:#444;transform:scaleX(0.8600);">Fri</span>
<span class="t" style="left:331.44px;top:57.92px;font-size:9px;line-height:9px;color:#444;transform:scaleX(0.8600);">Sat</span>
<span class="t" style="left:351.73px;top:57.92px;font-size:9px;line-height:9px;color:#444;transform:scaleX(0.8600);">Sun</span>
<div style="left:222.5px;top:68px;width:144.5px;height:1px;background:#c5d3e3"></div>
<span class="t" style="left:226.10px;top:72.52px;font-size:9px;line-height:9px;color:#9a9a9a;transform:scaleX(0.8600);">27</span>
<span class="t" style="left:247.47px;top:72.52px;font-size:9px;line-height:9px;color:#9a9a9a;transform:scaleX(0.8600);">28</span>
<span class="t" style="left:268.84px;top:72.52px;font-size:9px;line-height:9px;color:#9a9a9a;transform:scaleX(0.8600);">29</span>
<span class="t" style="left:290.21px;top:72.52px;font-size:9px;line-height:9px;color:#9a9a9a;transform:scaleX(0.8600);">30</span>
<span class="t" style="left:311.58px;top:72.52px;font-size:9px;line-height:9px;color:#9a9a9a;transform:scaleX(0.8600);">31</span>
<span class="t" style="left:335.10px;top:72.52px;font-size:9px;line-height:9px;color:#2c2440;transform:scaleX(0.8600);">1</span>
<span class="t" style="left:356.47px;top:72.52px;font-size:9px;line-height:9px;color:#2c2440;transform:scaleX(0.8600);">2</span>
<span class="t" style="left:228.25px;top:84.47px;font-size:9px;line-height:9px;color:#2c2440;transform:scaleX(0.8600);">3</span>
<span class="t" style="left:249.62px;top:84.47px;font-size:9px;line-height:9px;color:#2c2440;transform:scaleX(0.8600);">4</span>
<span class="t" style="left:270.99px;top:84.47px;font-size:9px;line-height:9px;color:#2c2440;transform:scaleX(0.8600);">5</span>
<span class="t" style="left:292.36px;top:84.47px;font-size:9px;line-height:9px;color:#2c2440;transform:scaleX(0.8600);">6</span>
<span class="t" style="left:313.73px;top:84.47px;font-size:9px;line-height:9px;color:#2c2440;transform:scaleX(0.8600);">7</span>
<span class="t" style="left:335.10px;top:84.47px;font-size:9px;line-height:9px;color:#2c2440;transform:scaleX(0.8600);">8</span>
<span class="t" style="left:356.47px;top:84.47px;font-size:9px;line-height:9px;color:#2c2440;transform:scaleX(0.8600);">9</span>
<span class="t" style="left:226.10px;top:96.42px;font-size:9px;line-height:9px;color:#2c2440;transform:scaleX(0.8600);">10</span>
<span class="t" style="left:247.75px;top:96.42px;font-size:9px;line-height:9px;color:#2c2440;transform:scaleX(0.8600);">11</span>
<span class="t" style="left:268.84px;top:96.42px;font-size:9px;line-height:9px;color:#2c2440;transform:scaleX(0.8600);">12</span>
<span class="t" style="left:290.21px;top:96.42px;font-size:9px;line-height:9px;color:#2c2440;transform:scaleX(0.8600);">13</span>
<span class="t" style="left:311.58px;top:96.42px;font-size:9px;line-height:9px;color:#2c2440;transform:scaleX(0.8600);">14</span>
<span class="t" style="left:332.95px;top:96.42px;font-size:9px;line-height:9px;color:#2c2440;transform:scaleX(0.8600);">15</span>
<span class="t" style="left:354.32px;top:96.42px;font-size:9px;line-height:9px;color:#2c2440;transform:scaleX(0.8600);">16</span>
<span class="t" style="left:226.10px;top:108.37px;font-size:9px;line-height:9px;color:#2c2440;transform:scaleX(0.8600);">17</span>
<span class="t" style="left:247.47px;top:108.37px;font-size:9px;line-height:9px;color:#2c2440;transform:scaleX(0.8600);">18</span>
<span class="t" style="left:268.84px;top:108.37px;font-size:9px;line-height:9px;color:#2c2440;transform:scaleX(0.8600);">19</span>
<span class="t" style="left:290.21px;top:108.37px;font-size:9px;line-height:9px;color:#2c2440;transform:scaleX(0.8600);">20</span>
<div style="left:284.2px;top:106.6px;width:21.5px;height:12.1px;background:#fbd55e;border:1px solid #e39a2a;box-sizing:border-box"></div>
<div style="left:286.2px;top:108.4px;width:17.6px;height:8.8px;border:0.7px dashed #444;box-sizing:border-box"></div>
<span class="t" style="left:290.30px;top:108.32px;font-size:9px;line-height:9px;color:#222;transform:scaleX(0.8600);">20</span>
<div style="left:220px;top:145.4px;width:150.5px;height:14.7px;background:#b1c4dc"></div>
<span class="t" style="left:223.50px;top:148.92px;font-size:9px;line-height:9px;color:#2a2a2a;transform:scaleX(0.9317);">Today: 20/02/2014</span>
<div style="left:218px;top:161.5px;width:153px;height:1px;background:#b8c8d8"></div>
<div style="left:226px;top:168.5px;width:1px;height:139.49px;background:repeating-linear-gradient(#b4b4b4 0 1px,transparent 1px 2px)"></div>
<div style="left:238.8px;top:193.96px;width:1px;height:81.84px;background:repeating-linear-gradient(#b4b4b4 0 1px,transparent 1px 2px)"></div>
<div style="left:223.1px;top:165.20000000000002px;width:6.6px;height:6.6px;border:1px solid #b4b8be;background:linear-gradient(#fdfdfd,#e4e8ee);box-sizing:border-box"></div>
<div style="left:224.4px;top:168.1px;width:4px;height:0.9px;background:#5a7ab0"></div>
<div style="left:225.95px;top:166.55px;width:0.9px;height:4px;background:#5a7ab0"></div>
<div style="left:232.5px;top:164.20000000000002px;width:8.5px;height:8.5px;border:1px solid #a8a8a8;background:linear-gradient(135deg,#d8d8d8,#f8f8f8);box-sizing:border-box"></div>
<span class="t" style="left:243.20px;top:164.62px;font-size:9px;line-height:9px;color:#2c2440;transform:scaleX(0.8300);">Main Site - Logger 1</span>
<div style="left:223.1px;top:175.93px;width:6.6px;height:6.6px;border:1px solid #b4b8be;background:linear-gradient(#fdfdfd,#e4e8ee);box-sizing:border-box"></div>
<div style="left:224.4px;top:178.82999999999998px;width:4px;height:0.9px;background:#5a7ab0"></div>
<div style="left:225.95px;top:177.28px;width:0.9px;height:4px;background:#5a7ab0"></div>
<div style="left:232.5px;top:174.93px;width:8.5px;height:8.5px;border:1px solid #a8a8a8;background:linear-gradient(135deg,#d8d8d8,#f8f8f8);box-sizing:border-box"></div>
<span class="t" style="left:243.20px;top:175.35px;font-size:9px;line-height:9px;color:#2c2440;transform:scaleX(0.8300);">Site 2</span>
<div style="left:223.1px;top:186.66000000000003px;width:6.6px;height:6.6px;border:1px solid #b4b8be;background:linear-gradient(#fdfdfd,#e4e8ee);box-sizing:border-box"></div>
<div style="left:224.4px;top:189.56px;width:4px;height:0.9px;background:#5a7ab0"></div>
<div style="left:232.5px;top:185.66000000000003px;width:8.5px;height:8.5px;border:1px solid #a8a8a8;background:linear-gradient(135deg,#d8d8d8,#f8f8f8);box-sizing:border-box"></div>
<svg style="position:absolute;left:232.7px;top:185.86px" width="8" height="8" viewBox="0 0 8 8"><path d="M1.6,4.2 L3.2,6.2 L6.6,1.4" fill="none" stroke="#2d4aa0" stroke-width="1.1"/></svg>
<span class="t" style="left:243.20px;top:186.08px;font-size:9px;line-height:9px;color:#2c2440;transform:scaleX(0.8300);">Sub A Logger ID1 via TCP</span>
<div style="left:239.5px;top:200.59px;width:5.5px;height:1px;background:repeating-linear-gradient(90deg,#b4b4b4 0 1px,transparent 1px 2px)"></div>
<div style="left:245.2px;top:196.39000000000001px;width:8.7px;height:8.7px;border:1px solid #a8a8a8;background:linear-gradient(135deg,#d8d8d8,#f8f8f8);box-sizing:border-box"></div>
<svg style="position:absolute;left:245.5px;top:196.59px" width="8" height="8" viewBox="0 0 8 8"><path d="M1.6,4.2 L3.2,6.2 L6.6,1.4" fill="none" stroke="#2d4aa0" stroke-width="1.1"/></svg>
<span class="t" style="left:255.50px;top:196.81px;font-size:9px;line-height:9px;color:#2c2440;transform:scaleX(0.8300);">Sym Office kWh</span>
<div style="left:239.5px;top:211.32px;width:5.5px;height:1px;background:repeating-linear-gradient(90deg,#b4b4b4 0 1px,transparent 1px 2px)"></div>
<div style="left:245.2px;top:207.12px;width:8.7px;height:8.7px;border:1px solid #a8a8a8;background:linear-gradient(135deg,#d8d8d8,#f8f8f8);box-sizing:border-box"></div>
<svg style="position:absolute;left:245.5px;top:207.32px" width="8" height="8" viewBox="0 0 8 8"><path d="M1.6,4.2 L3.2,6.2 L6.6,1.4" fill="none" stroke="#2d4aa0" stroke-width="1.1"/></svg>
<span class="t" style="left:255.50px;top:207.54px;font-size:9px;line-height:9px;color:#2c2440;transform:scaleX(0.8300);">NFE Office</span>
<div style="left:239.5px;top:222.05px;width:5.5px;height:1px;background:repeating-linear-gradient(90deg,#b4b4b4 0 1px,transparent 1px 2px)"></div>
<div style="left:245.2px;top:217.85000000000002px;width:8.7px;height:8.7px;border:1px solid #a8a8a8;background:linear-gradient(135deg,#d8d8d8,#f8f8f8);box-sizing:border-box"></div>
<span class="t" style="left:255.50px;top:218.27px;font-size:9px;line-height:9px;color:#2c2440;transform:scaleX(0.8300);">Furnace 1</span>
<div style="left:239.5px;top:232.78px;width:5.5px;height:1px;background:repeating-linear-gradient(90deg,#b4b4b4 0 1px,transparent 1px 2px)"></div>
<div style="left:245.2px;top:228.58px;width:8.7px;height:8.7px;border:1px solid #a8a8a8;background:linear-gradient(135deg,#d8d8d8,#f8f8f8);box-sizing:border-box"></div>
<span class="t" style="left:255.50px;top:229.00px;font-size:9px;line-height:9px;color:#2c2440;transform:scaleX(0.8300);">Furnace 2</span>
<div style="left:239.5px;top:243.51px;width:5.5px;height:1px;background:repeating-linear-gradient(90deg,#b4b4b4 0 1px,transparent 1px 2px)"></div>
<div style="left:245.2px;top:239.31px;width:8.7px;height:8.7px;border:1px solid #a8a8a8;background:linear-gradient(135deg,#d8d8d8,#f8f8f8);box-sizing:border-box"></div>
<span class="t" style="left:255.50px;top:239.73px;font-size:9px;line-height:9px;color:#2c2440;transform:scaleX(0.8300);">Site Water</span>
<div style="left:239.5px;top:254.24px;width:5.5px;height:1px;background:repeating-linear-gradient(90deg,#b4b4b4 0 1px,transparent 1px 2px)"></div>
<div style="left:245.2px;top:250.04000000000002px;width:8.7px;height:8.7px;border:1px solid #a8a8a8;background:linear-gradient(135deg,#d8d8d8,#f8f8f8);box-sizing:border-box"></div>
<span class="t" style="left:255.50px;top:250.46px;font-size:9px;line-height:9px;color:#2c2440;transform:scaleX(0.8300);">Other Offices</span>
<div style="left:239.5px;top:264.97px;width:5.5px;height:1px;background:repeating-linear-gradient(90deg,#b4b4b4 0 1px,transparent 1px 2px)"></div>
<div style="left:245.2px;top:260.77000000000004px;width:8.7px;height:8.7px;border:1px solid #a8a8a8;background:linear-gradient(135deg,#d8d8d8,#f8f8f8);box-sizing:border-box"></div>
<span class="t" style="left:255.50px;top:261.19px;font-size:9px;line-height:9px;color:#2c2440;transform:scaleX(0.8300);">Site gas</span>
<div style="left:239.5px;top:275.70000000000005px;width:5.5px;height:1px;background:repeating-linear-gradient(90deg,#b4b4b4 0 1px,transparent 1px 2px)"></div>
<div style="left:245.2px;top:271.50000000000006px;width:8.7px;height:8.7px;border:1px solid #a8a8a8;background:linear-gradient(135deg,#d8d8d8,#f8f8f8);box-sizing:border-box"></div>
<span class="t" style="left:255.50px;top:271.92px;font-size:9px;line-height:9px;color:#2c2440;transform:scaleX(0.8300);">Units Produced</span>
<div style="left:223.1px;top:283.23px;width:6.6px;height:6.6px;border:1px solid #b4b8be;background:linear-gradient(#fdfdfd,#e4e8ee);box-sizing:border-box"></div>
<div style="left:224.4px;top:286.13px;width:4px;height:0.9px;background:#5a7ab0"></div>
<div style="left:225.95px;top:284.58px;width:0.9px;height:4px;background:#5a7ab0"></div>
<div style="left:232.5px;top:282.23px;width:8.5px;height:8.5px;border:1px solid #a8a8a8;background:linear-gradient(135deg,#d8d8d8,#f8f8f8);box-sizing:border-box"></div>
<span class="t" style="left:243.20px;top:282.65px;font-size:9px;line-height:9px;color:#2c2440;transform:scaleX(0.8300);">Logger ID 4</span>
<div style="left:223.1px;top:293.96px;width:6.6px;height:6.6px;border:1px solid #b4b8be;background:linear-gradient(#fdfdfd,#e4e8ee);box-sizing:border-box"></div>
<div style="left:224.4px;top:296.85999999999996px;width:4px;height:0.9px;background:#5a7ab0"></div>
<div style="left:225.95px;top:295.30999999999995px;width:0.9px;height:4px;background:#5a7ab0"></div>
<div style="left:232.5px;top:292.96px;width:8.5px;height:8.5px;border:1px solid #a8a8a8;background:linear-gradient(135deg,#d8d8d8,#f8f8f8);box-sizing:border-box"></div>
<span class="t" style="left:243.20px;top:293.38px;font-size:9px;line-height:9px;color:#2c2440;transform:scaleX(0.8300);">Logger ID 5</span>
<div style="left:223.1px;top:304.69px;width:6.6px;height:6.6px;border:1px solid #b4b8be;background:linear-gradient(#fdfdfd,#e4e8ee);box-sizing:border-box"></div>
<div style="left:224.4px;top:307.59px;width:4px;height:0.9px;background:#5a7ab0"></div>
<div style="left:225.95px;top:306.03999999999996px;width:0.9px;height:4px;background:#5a7ab0"></div>
<div style="left:232.5px;top:303.69px;width:8.5px;height:8.5px;border:1px solid #a8a8a8;background:linear-gradient(135deg,#d8d8d8,#f8f8f8);box-sizing:border-box"></div>
<span class="t" style="left:243.20px;top:304.11px;font-size:9px;line-height:9px;color:#2c2440;transform:scaleX(0.8300);">MicroLogger 3</span>
<div style="left:371px;top:39.5px;width:1px;height:422px;background:#9c9c9c"></div>
<div style="left:372px;top:39.5px;width:2.2px;height:422px;background:#e2e2e2"></div>
<div style="left:374px;top:38.5px;width:580.5px;height:423px;background:linear-gradient(#e8e8e8 0%,#ececec 40%,#fbfbfb 100%);border-left:1px solid #c4c4c4;border-top:1px solid #c8c8c8;box-sizing:border-box"></div>
<div style="left:953px;top:38.5px;width:2.5px;height:424px;background:linear-gradient(90deg,#c4c4c4,#e2e2e2)"></div>
<div style="left:374px;top:460px;width:581.5px;height:2.5px;background:linear-gradient(#d4d4d4,#b8b8b8)"></div>
<div style="left:216.5px;top:461px;width:156px;height:1px;background:#8a8a8a"></div>
<div style="left:212.5px;top:462.5px;width:745px;height:3.5px;background:#f6f6f7"></div>
<span class="t" style="left:458.00px;top:56.72px;font-size:9px;line-height:9px;color:#3a3296;transform:scaleX(0.9470);-webkit-text-stroke:0.15px #3a3296">Raw channel data for Sub A Logger ID1 via TCP from 10/02/2014 to 20/02/2014</span>
<span class="t" style="left:458.00px;top:66.22px;font-size:9px;line-height:9px;color:#3a3296;transform:scaleX(0.9688);-webkit-text-stroke:0.15px #3a3296">(Daylight Savings times)</span>
<svg style="position:absolute;left:0;top:0" width="960" height="664" viewBox="0 0 960 664"><defs><linearGradient id="pg" x1="0" y1="0" x2="0" y2="1"><stop offset="0" stop-color="#eeeeee"/><stop offset="1" stop-color="#f8f8f8"/></linearGradient></defs><rect x="414" y="80" width="417" height="351.3" fill="url(#pg)"/><line x1="421.0" y1="80" x2="421.0" y2="431.3" stroke="#e7e7e7" stroke-width="0.5"/><line x1="427.9" y1="80" x2="427.9" y2="431.3" stroke="#e7e7e7" stroke-width="0.5"/><line x1="434.9" y1="80" x2="434.9" y2="431.3" stroke="#e7e7e7" stroke-width="0.5"/><line x1="441.8" y1="80" x2="441.8" y2="431.3" stroke="#e7e7e7" stroke-width="0.5"/><line x1="448.8" y1="80" x2="448.8" y2="431.3" stroke="#e7e7e7" stroke-width="0.5"/><line x1="455.7" y1="80" x2="455.7" y2="431.3" stroke="#e7e7e7" stroke-width="0.5"/><line x1="462.7" y1="80" x2="462.7" y2="431.3" stroke="#e7e7e7" stroke-width="0.5"/><line x1="469.6" y1="80" x2="469.6" y2="431.3" stroke="#e7e7e7" stroke-width="0.5"/><line x1="476.6" y1="80" x2="476.6" y2="431.3" stroke="#e7e7e7" stroke-width="0.5"/><line x1="483.5" y1="80" x2="483.5" y2="431.3" stroke="#e7e7e7" stroke-width="0.5"/><line x1="490.5" y1="80" x2="490.5" y2="431.3" stroke="#e7e7e7" stroke-width="0.5"/><line x1="497.4" y1="80" x2="497.4" y2="431.3" stroke="#e7e7e7" stroke-width="0.5"/><line x1="504.4" y1="80" x2="504.4" y2="431.3" stroke="#e7e7e7" stroke-width="0.5"/><line x1="511.3" y1="80" x2="511.3" y2="431.3" stroke="#e7e7e7" stroke-width="0.5"/><line x1="518.3" y1="80" x2="518.3" y2="431.3" stroke="#e7e7e7" stroke-width="0.5"/><line x1="525.2" y1="80" x2="525.2" y2="431.3" stroke="#e7e7e7" stroke-width="0.5"/><line x1="532.2" y1="80" x2="532.2" y2="431.3" stroke="#e7e7e7" stroke-width="0.5"/><line x1="539.1" y1="80" x2="539.1" y2="431.3" stroke="#e7e7e7" stroke-width="0.5"/><line x1="546.1" y1="80" x2="546.1" y2="431.3" stroke="#e7e7e7" stroke-width="0.5"/><line x1="553.1" y1="80" x2="553.1" y2="431.3" stroke="#e7e7e7" stroke-width="0.5"/><line x1="560.0" y1="80" x2="560.0" y2="431.3" stroke="#e7e7e7" stroke-width="0.5"/><line x1="567.0" y1="80" x2="567.0" y2="431.3" stroke="#e7e7e7" stroke-width="0.5"/><line x1="573.9" y1="80" x2="573.9" y2="431.3" stroke="#e7e7e7" stroke-width="0.5"/><line x1="580.9" y1="80" x2="580.9" y2="431.3" stroke="#e7e7e7" stroke-width="0.5"/><line x1="587.8" y1="80" x2="587.8" y2="431.3" stroke="#e7e7e7" stroke-width="0.5"/><line x1="594.8" y1="80" x2="594.8" y2="431.3" stroke="#e7e7e7" stroke-width="0.5"/><line x1="601.7" y1="80" x2="601.7" y2="431.3" stroke="#e7e7e7" stroke-width="0.5"/><line x1="608.7" y1="80" x2="608.7" y2="431.3" stroke="#e7e7e7" stroke-width="0.5"/><line x1="615.6" y1="80" x2="615.6" y2="431.3" stroke="#e7e7e7" stroke-width="0.5"/><line x1="622.6" y1="80" x2="622.6" y2="431.3" stroke="#e7e7e7" stroke-width="0.5"/><line x1="629.5" y1="80" x2="629.5" y2="431.3" stroke="#e7e7e7" stroke-width="0.5"/><line x1="636.5" y1="80" x2="636.5" y2="431.3" stroke="#e7e7e7" stroke-width="0.5"/><line x1="643.4" y1="80" x2="643.4" y2="431.3" stroke="#e7e7e7" stroke-width="0.5"/><line x1="650.4" y1="80" x2="650.4" y2="431.3" stroke="#e7e7e7" stroke-width="0.5"/><line x1="657.3" y1="80" x2="657.3" y2="431.3" stroke="#e7e7e7" stroke-width="0.5"/><line x1="664.3" y1="80" x2="664.3" y2="431.3" stroke="#e7e7e7" stroke-width="0.5"/><line x1="671.2" y1="80" x2="671.2" y2="431.3" stroke="#e7e7e7" stroke-width="0.5"/><line x1="678.2" y1="80" x2="678.2" y2="431.3" stroke="#e7e7e7" stroke-width="0.5"/><line x1="685.1" y1="80" x2="685.1" y2="431.3" stroke="#e7e7e7" stroke-width="0.5"/><line x1="692.1" y1="80" x2="692.1" y2="431.3" stroke="#e7e7e7" stroke-width="0.5"/><line x1="699.0" y1="80" x2="699.0" y2="431.3" stroke="#e7e7e7" stroke-width="0.5"/><line x1="706.0" y1="80" x2="706.0" y2="431.3" stroke="#e7e7e7" stroke-width="0.5"/><line x1="712.9" y1="80" x2="712.9" y2="431.3" stroke="#e7e7e7" stroke-width="0.5"/><line x1="719.9" y1="80" x2="719.9" y2="431.3" stroke="#e7e7e7" stroke-width="0.5"/><line x1="726.8" y1="80" x2="726.8" y2="431.3" stroke="#e7e7e7" stroke-width="0.5"/><line x1="733.8" y1="80" x2="733.8" y2="431.3" stroke="#e7e7e7" stroke-width="0.5"/><line x1="740.7" y1="80" x2="740.7" y2="431.3" stroke="#e7e7e7" stroke-width="0.5"/><line x1="747.7" y1="80" x2="747.7" y2="431.3" stroke="#e7e7e7" stroke-width="0.5"/><line x1="754.6" y1="80" x2="754.6" y2="431.3" stroke="#e7e7e7" stroke-width="0.5"/><line x1="761.6" y1="80" x2="761.6" y2="431.3" stroke="#e7e7e7" stroke-width="0.5"/><line x1="768.5" y1="80" x2="768.5" y2="431.3" stroke="#e7e7e7" stroke-width="0.5"/><line x1="775.5" y1="80" x2="775.5" y2="431.3" stroke="#e7e7e7" stroke-width="0.5"/><line x1="782.4" y1="80" x2="782.4" y2="431.3" stroke="#e7e7e7" stroke-width="0.5"/><line x1="789.4" y1="80" x2="789.4" y2="431.3" stroke="#e7e7e7" stroke-width="0.5"/><line x1="796.3" y1="80" x2="796.3" y2="431.3" stroke="#e7e7e7" stroke-width="0.5"/><line x1="803.3" y1="80" x2="803.3" y2="431.3" stroke="#e7e7e7" stroke-width="0.5"/><line x1="810.2" y1="80" x2="810.2" y2="431.3" stroke="#e7e7e7" stroke-width="0.5"/><line x1="817.2" y1="80" x2="817.2" y2="431.3" stroke="#e7e7e7" stroke-width="0.5"/><line x1="824.1" y1="80" x2="824.1" y2="431.3" stroke="#e7e7e7" stroke-width="0.5"/><line x1="414" y1="421.2" x2="831" y2="421.2" stroke="#c6c6c6" stroke-width="0.75" stroke-dasharray="3,1"/><line x1="414" y1="411.0" x2="831" y2="411.0" stroke="#c6c6c6" stroke-width="0.75" stroke-dasharray="3,1"/><line x1="414" y1="400.9" x2="831" y2="400.9" stroke="#c6c6c6" stroke-width="0.75" stroke-dasharray="3,1"/><line x1="414" y1="390.7" x2="831" y2="390.7" stroke="#c6c6c6" stroke-width="0.75" stroke-dasharray="3,1"/><line x1="414" y1="380.6" x2="831" y2="380.6" stroke="#c6c6c6" stroke-width="0.75" stroke-dasharray="3,1"/><line x1="414" y1="370.4" x2="831" y2="370.4" stroke="#c6c6c6" stroke-width="0.75" stroke-dasharray="3,1"/><line x1="414" y1="360.2" x2="831" y2="360.2" stroke="#c6c6c6" stroke-width="0.75" stroke-dasharray="3,1"/><line x1="414" y1="350.1" x2="831" y2="350.1" stroke="#c6c6c6" stroke-width="0.75" stroke-dasharray="3,1"/><line x1="414" y1="339.9" x2="831" y2="339.9" stroke="#c6c6c6" stroke-width="0.75" stroke-dasharray="3,1"/><line x1="414" y1="329.8" x2="831" y2="329.8" stroke="#c6c6c6" stroke-width="0.75" stroke-dasharray="3,1"/><line x1="414" y1="319.6" x2="831" y2="319.6" stroke="#c6c6c6" stroke-width="0.75" stroke-dasharray="3,1"/><line x1="414" y1="309.5" x2="831" y2="309.5" stroke="#c6c6c6" stroke-width="0.75" stroke-dasharray="3,1"/><line x1="414" y1="299.4" x2="831" y2="299.4" stroke="#c6c6c6" stroke-width="0.75" stroke-dasharray="3,1"/><line x1="414" y1="289.2" x2="831" y2="289.2" stroke="#c6c6c6" stroke-width="0.75" stroke-dasharray="3,1"/><line x1="414" y1="279.1" x2="831" y2="279.1" stroke="#c6c6c6" stroke-width="0.75" stroke-dasharray="3,1"/><line x1="414" y1="268.9" x2="831" y2="268.9" stroke="#c6c6c6" stroke-width="0.75" stroke-dasharray="3,1"/><line x1="414" y1="258.8" x2="831" y2="258.8" stroke="#c6c6c6" stroke-width="0.75" stroke-dasharray="3,1"/><line x1="414" y1="248.6" x2="831" y2="248.6" stroke="#c6c6c6" stroke-width="0.75" stroke-dasharray="3,1"/><line x1="414" y1="238.5" x2="831" y2="238.5" stroke="#c6c6c6" stroke-width="0.75" stroke-dasharray="3,1"/><line x1="414" y1="228.3" x2="831" y2="228.3" stroke="#c6c6c6" stroke-width="0.75" stroke-dasharray="3,1"/><line x1="414" y1="218.2" x2="831" y2="218.2" stroke="#c6c6c6" stroke-width="0.75" stroke-dasharray="3,1"/><line x1="414" y1="208.0" x2="831" y2="208.0" stroke="#c6c6c6" stroke-width="0.75" stroke-dasharray="3,1"/><line x1="414" y1="197.9" x2="831" y2="197.9" stroke="#c6c6c6" stroke-width="0.75" stroke-dasharray="3,1"/><line x1="414" y1="187.7" x2="831" y2="187.7" stroke="#c6c6c6" stroke-width="0.75" stroke-dasharray="3,1"/><line x1="414" y1="177.6" x2="831" y2="177.6" stroke="#c6c6c6" stroke-width="0.75" stroke-dasharray="3,1"/><line x1="414" y1="167.4" x2="831" y2="167.4" stroke="#c6c6c6" stroke-width="0.75" stroke-dasharray="3,1"/><line x1="414" y1="157.2" x2="831" y2="157.2" stroke="#c6c6c6" stroke-width="0.75" stroke-dasharray="3,1"/><line x1="414" y1="147.1" x2="831" y2="147.1" stroke="#c6c6c6" stroke-width="0.75" stroke-dasharray="3,1"/><line x1="414" y1="137.0" x2="831" y2="137.0" stroke="#c6c6c6" stroke-width="0.75" stroke-dasharray="3,1"/><line x1="414" y1="126.8" x2="831" y2="126.8" stroke="#c6c6c6" stroke-width="0.75" stroke-dasharray="3,1"/><line x1="414" y1="116.6" x2="831" y2="116.6" stroke="#c6c6c6" stroke-width="0.75" stroke-dasharray="3,1"/><line x1="414" y1="106.5" x2="831" y2="106.5" stroke="#c6c6c6" stroke-width="0.75" stroke-dasharray="3,1"/><line x1="414" y1="96.4" x2="831" y2="96.4" stroke="#c6c6c6" stroke-width="0.75" stroke-dasharray="3,1"/><line x1="414" y1="86.2" x2="831" y2="86.2" stroke="#c6c6c6" stroke-width="0.75" stroke-dasharray="3,1"/><path d="M414,431.3 L414.0,388.7L414.5,388.7L414.5,388.7L415.0,388.7L415.0,385.2L415.5,385.2L415.5,383.6L416.0,383.6L416.0,383.5L416.5,383.5L416.5,382.5L417.0,382.5L417.0,383.0L417.5,383.0L417.5,383.4L418.0,383.4L418.0,382.4L418.5,382.4L418.5,385.1L419.0,385.1L419.0,386.6L419.5,386.6L419.5,388.2L420.0,388.2L420.0,388.2L420.5,388.2L420.5,388.2L421.0,388.2L421.0,388.2L421.5,388.2L421.5,388.2L422.0,388.2L422.0,388.2L422.5,388.2L422.5,384.2L423.0,384.2L423.0,384.2L423.5,384.2L423.5,385.2L424.0,385.2L424.0,385.2L424.5,385.2L424.5,388.4L425.0,388.4L425.0,389.9L425.5,389.9L425.5,389.9L426.0,389.9L426.0,389.9L426.5,389.9L426.5,390.9L427.0,390.9L427.0,389.9L427.5,389.9L427.5,389.9L428.0,389.9L428.0,389.9L428.5,389.9L428.5,128.0L429.0,128.0L429.0,93.2L429.5,93.2L429.5,92.2L430.0,92.2L430.0,90.2L430.5,90.2L430.5,202.6L431.0,202.6L431.0,201.6L431.5,201.6L431.5,209.0L432.0,209.0L432.0,208.0L432.5,208.0L432.5,210.0L433.0,210.0L433.0,221.6L433.5,221.6L433.5,221.6L434.0,221.6L434.0,221.6L434.5,221.6L434.5,217.0L435.0,217.0L435.0,216.0L435.5,216.0L435.5,213.0L436.0,213.0L436.0,201.6L436.5,201.6L436.5,202.6L437.0,202.6L437.0,201.6L437.5,201.6L437.5,203.6L438.0,203.6L438.0,200.6L438.5,200.6L438.5,202.6L439.0,202.6L439.0,212.0L439.5,212.0L439.5,211.0L440.0,211.0L440.0,212.0L440.5,212.0L440.5,213.0L441.0,213.0L441.0,212.0L441.5,212.0L441.5,212.0L442.0,212.0L442.0,212.0L442.5,212.0L442.5,212.0L443.0,212.0L443.0,213.0L443.5,213.0L443.5,372.5L444.0,372.5L444.0,372.5L444.5,372.5L444.5,368.5L445.0,368.5L445.0,369.0L445.5,369.0L445.5,368.5L446.0,368.5L446.0,368.5L446.5,368.5L446.5,371.0L447.0,371.0L447.0,373.0L447.5,373.0L447.5,373.0L448.0,373.0L448.0,372.5L448.5,372.5L448.5,372.5L449.0,372.5L449.0,372.5L449.5,372.5L449.5,372.5L450.0,372.5L450.0,372.5L450.5,372.5L450.5,373.0L451.0,373.0L451.0,372.5L451.5,372.5L451.5,372.5L452.0,372.5L452.0,368.5L452.5,368.5L452.5,369.0L453.0,369.0L453.0,369.5L453.5,369.5L453.5,369.0L454.0,369.0L454.0,371.0L454.5,371.0L454.5,372.5L455.0,372.5L455.0,373.0L455.5,373.0L455.5,373.0L456.0,373.0L456.0,372.5L456.5,372.5L456.5,372.5L457.0,372.5L457.0,372.5L457.5,372.5L457.5,372.5L458.0,372.5L458.0,373.0L458.5,373.0L458.5,373.5L459.0,373.5L459.0,372.5L459.5,372.5L459.5,368.5L460.0,368.5L460.0,368.5L460.5,368.5L460.5,369.5L461.0,369.5L461.0,368.5L461.5,368.5L461.5,371.0L462.0,371.0L462.0,372.5L462.5,372.5L462.5,373.5L463.0,373.5L463.0,372.5L463.5,372.5L463.5,373.5L464.0,373.5L464.0,372.5L464.5,372.5L464.5,373.0L465.0,373.0L465.0,373.5L465.5,373.5L465.5,373.5L466.0,373.5L466.0,222.6L466.5,222.6L466.5,220.6L467.0,220.6L467.0,218.6L467.5,218.6L467.5,220.6L468.0,220.6L468.0,153.7L468.5,153.7L468.5,152.7L469.0,152.7L469.0,208.0L469.5,208.0L469.5,208.0L470.0,208.0L470.0,207.0L470.5,207.0L470.5,208.0L471.0,208.0L471.0,228.0L471.5,228.0L471.5,228.0L472.0,228.0L472.0,230.0L472.5,230.0L472.5,230.0L473.0,230.0L473.0,201.6L473.5,201.6L473.5,202.6L474.0,202.6L474.0,199.6L474.5,199.6L474.5,202.6L475.0,202.6L475.0,199.6L475.5,199.6L475.5,199.5L476.0,199.5L476.0,197.5L476.5,197.5L476.5,197.5L477.0,197.5L477.0,197.5L477.5,197.5L477.5,199.5L478.0,199.5L478.0,214.4L478.5,214.4L478.5,216.4L479.0,216.4L479.0,218.4L479.5,218.4L479.5,215.4L480.0,215.4L480.0,222.0L480.5,222.0L480.5,226.0L481.0,226.0L481.0,225.0L481.5,225.0L481.5,226.0L482.0,226.0L482.0,291.0L482.5,291.0L482.5,292.0L483.0,292.0L483.0,373.0L483.5,373.0L483.5,372.5L484.0,372.5L484.0,368.5L484.5,368.5L484.5,368.5L485.0,368.5L485.0,368.5L485.5,368.5L485.5,369.5L486.0,369.5L486.0,371.5L486.5,371.5L486.5,373.5L487.0,373.5L487.0,373.0L487.5,373.0L487.5,372.5L488.0,372.5L488.0,372.5L488.5,372.5L488.5,372.5L489.0,372.5L489.0,373.0L489.5,373.0L489.5,373.0L490.0,373.0L490.0,373.0L490.5,373.0L490.5,373.5L491.0,373.5L491.0,372.5L491.5,372.5L491.5,368.5L492.0,368.5L492.0,369.5L492.5,369.5L492.5,369.5L493.0,369.5L493.0,368.5L493.5,368.5L493.5,371.0L494.0,371.0L494.0,372.5L494.5,372.5L494.5,372.5L495.0,372.5L495.0,373.0L495.5,373.0L495.5,372.5L496.0,372.5L496.0,372.5L496.5,372.5L496.5,372.5L497.0,372.5L497.0,373.5L497.5,373.5L497.5,372.5L498.0,372.5L498.0,372.5L498.5,372.5L498.5,372.5L499.0,372.5L499.0,369.5L499.5,369.5L499.5,368.5L500.0,368.5L500.0,368.5L500.5,368.5L500.5,369.0L501.0,369.0L501.0,371.0L501.5,371.0L501.5,372.5L502.0,372.5L502.0,372.5L502.5,372.5L502.5,372.5L503.0,372.5L503.0,204.7L503.5,204.7L503.5,203.7L504.0,203.7L504.0,201.7L504.5,201.7L504.5,193.0L505.0,193.0L505.0,193.0L505.5,193.0L505.5,191.0L506.0,191.0L506.0,217.5L506.5,217.5L506.5,218.5L507.0,218.5L507.0,235.4L507.5,235.4L507.5,235.4L508.0,235.4L508.0,233.4L508.5,233.4L508.5,235.4L509.0,235.4L509.0,263.9L509.5,263.9L509.5,263.9L510.0,263.9L510.0,262.9L510.5,262.9L510.5,264.9L511.0,264.9L511.0,237.5L511.5,237.5L511.5,237.5L512.0,237.5L512.0,289.0L512.5,289.0L512.5,289.5L513.0,289.5L513.0,257.4L513.5,257.4L513.5,253.4L514.0,253.4L514.0,255.4L514.5,255.4L514.5,254.4L515.0,254.4L515.0,249.0L515.5,249.0L515.5,250.0L516.0,250.0L516.0,252.0L516.5,252.0L516.5,239.6L517.0,239.6L517.0,241.6L517.5,241.6L517.5,240.6L518.0,240.6L518.0,239.6L518.5,239.6L518.5,240.6L519.0,240.6L519.0,373.0L519.5,373.0L519.5,373.0L520.0,373.0L520.0,369.0L520.5,369.0L520.5,370.0L521.0,370.0L521.0,369.0L521.5,369.0L521.5,369.0L522.0,369.0L522.0,371.5L522.5,371.5L522.5,373.5L523.0,373.5L523.0,373.5L523.5,373.5L523.5,373.5L524.0,373.5L524.0,373.0L524.5,373.0L524.5,373.5L525.0,373.5L525.0,374.0L525.5,374.0L525.5,374.0L526.0,374.0L526.0,373.0L526.5,373.0L526.5,373.0L527.0,373.0L527.0,373.5L527.5,373.5L527.5,369.0L528.0,369.0L528.0,370.0L528.5,370.0L528.5,369.5L529.0,369.5L529.0,370.0L529.5,370.0L529.5,372.5L530.0,372.5L530.0,373.0L530.5,373.0L530.5,374.0L531.0,374.0L531.0,373.5L531.5,373.5L531.5,373.0L532.0,373.0L532.0,373.0L532.5,373.0L532.5,374.0L533.0,374.0L533.0,373.5L533.5,373.5L533.5,373.0L534.0,373.0L534.0,373.0L534.5,373.0L534.5,374.0L535.0,374.0L535.0,370.0L535.5,370.0L535.5,369.0L536.0,369.0L536.0,369.5L536.5,369.5L536.5,369.0L537.0,369.0L537.0,372.0L537.5,372.0L537.5,373.0L538.0,373.0L538.0,373.5L538.5,373.5L538.5,373.0L539.0,373.0L539.0,373.0L539.5,373.0L539.5,373.0L540.0,373.0L540.0,373.0L540.5,373.0L540.5,373.5L541.0,373.5L541.0,373.0L541.5,373.0L541.5,222.7L542.0,222.7L542.0,221.7L542.5,221.7L542.5,224.7L543.0,224.7L543.0,202.6L543.5,202.6L543.5,203.6L544.0,203.6L544.0,202.6L544.5,202.6L544.5,202.6L545.0,202.6L545.0,206.9L545.5,206.9L545.5,208.9L546.0,208.9L546.0,208.9L546.5,208.9L546.5,208.9L547.0,208.9L547.0,216.3L547.5,216.3L547.5,216.3L548.0,216.3L548.0,241.8L548.5,241.8L548.5,243.8L549.0,243.8L549.0,367.0L549.5,367.0L549.5,205.7L550.0,205.7L550.0,201.7L550.5,201.7L550.5,204.7L551.0,204.7L551.0,204.7L551.5,204.7L551.5,202.7L552.0,202.7L552.0,215.4L552.5,215.4L552.5,216.4L553.0,216.4L553.0,218.4L553.5,218.4L553.5,218.4L554.0,218.4L554.0,226.8L554.5,226.8L554.5,224.8L555.0,224.8L555.0,226.8L555.5,226.8L555.5,224.8L556.0,224.8L556.0,242.7L556.5,242.7L556.5,364.0L557.0,364.0L557.0,364.0L557.5,364.0L557.5,364.5L558.0,364.5L558.0,360.0L558.5,360.0L558.5,360.5L559.0,360.5L559.0,361.0L559.5,361.0L559.5,360.0L560.0,360.0L560.0,363.5L560.5,363.5L560.5,364.0L561.0,364.0L561.0,364.0L561.5,364.0L561.5,365.0L562.0,365.0L562.0,364.0L562.5,364.0L562.5,364.0L563.0,364.0L563.0,365.0L563.5,365.0L563.5,364.0L564.0,364.0L564.0,364.5L564.5,364.5L564.5,364.0L565.0,364.0L565.0,364.0L565.5,364.0L565.5,360.0L566.0,360.0L566.0,360.0L566.5,360.0L566.5,360.0L567.0,360.0L567.0,361.0L567.5,361.0L567.5,362.5L568.0,362.5L568.0,364.0L568.5,364.0L568.5,364.5L569.0,364.5L569.0,364.0L569.5,364.0L569.5,364.0L570.0,364.0L570.0,365.0L570.5,365.0L570.5,364.0L571.0,364.0L571.0,364.0L571.5,364.0L571.5,364.0L572.0,364.0L572.0,365.0L572.5,365.0L572.5,365.0L573.0,365.0L573.0,360.5L573.5,360.5L573.5,360.0L574.0,360.0L574.0,360.5L574.5,360.5L574.5,360.5L575.0,360.5L575.0,363.0L575.5,363.0L575.5,364.0L576.0,364.0L576.0,364.0L576.5,364.0L576.5,365.0L577.0,365.0L577.0,365.0L577.5,365.0L577.5,364.5L578.0,364.5L578.0,364.0L578.5,364.0L578.5,364.0L579.0,364.0L579.0,220.6L579.5,220.6L579.5,221.6L580.0,221.6L580.0,202.7L580.5,202.7L580.5,204.7L581.0,204.7L581.0,195.4L581.5,195.4L581.5,195.4L582.0,195.4L582.0,194.4L582.5,194.4L582.5,197.4L583.0,197.4L583.0,198.4L583.5,198.4L583.5,210.0L584.0,210.0L584.0,212.0L584.5,212.0L584.5,211.0L585.0,211.0L585.0,198.5L585.5,198.5L585.5,200.5L586.0,200.5L586.0,198.5L586.5,198.5L586.5,197.5L587.0,197.5L587.0,199.5L587.5,199.5L587.5,216.4L588.0,216.4L588.0,216.4L588.5,216.4L588.5,217.4L589.0,217.4L589.0,206.0L589.5,206.0L589.5,206.0L590.0,206.0L590.0,207.0L590.5,207.0L590.5,248.0L591.0,248.0L591.0,245.0L591.5,245.0L591.5,222.8L592.0,222.8L592.0,221.8L592.5,221.8L592.5,222.8L593.0,222.8L593.0,222.8L593.5,222.8L593.5,375.8L594.0,375.8L594.0,375.8L594.5,375.8L594.5,376.8L595.0,376.8L595.0,371.8L595.5,371.8L595.5,371.8L596.0,371.8L596.0,372.8L596.5,372.8L596.5,371.8L597.0,371.8L597.0,374.3L597.5,374.3L597.5,376.3L598.0,376.3L598.0,376.3L598.5,376.3L598.5,375.8L599.0,375.8L599.0,376.3L599.5,376.3L599.5,375.8L600.0,375.8L600.0,375.8L600.5,375.8L600.5,375.8L601.0,375.8L601.0,375.8L601.5,375.8L601.5,376.8L602.0,376.8L602.0,376.3L602.5,376.3L602.5,372.8L603.0,372.8L603.0,371.8L603.5,371.8L603.5,372.3L604.0,372.3L604.0,372.8L604.5,372.8L604.5,375.3L605.0,375.3L605.0,375.8L605.5,375.8L605.5,376.8L606.0,376.8L606.0,375.8L606.5,375.8L606.5,376.3L607.0,376.3L607.0,375.8L607.5,375.8L607.5,375.8L608.0,375.8L608.0,376.8L608.5,376.8L608.5,376.8L609.0,376.8L609.0,375.8L609.5,375.8L609.5,376.8L610.0,376.8L610.0,372.8L610.5,372.8L610.5,372.8L611.0,372.8L611.0,371.8L611.5,371.8L611.5,371.8L612.0,371.8L612.0,375.0L612.5,375.0L612.5,379.2L613.0,379.2L613.0,380.8L613.5,380.8L613.5,382.5L614.0,382.5L614.0,385.7L614.5,385.7L614.5,387.3L615.0,387.3L615.0,389.0L615.5,389.0L615.5,389.5L616.0,389.5L616.0,389.0L616.5,389.0L616.5,389.5L617.0,389.5L617.0,390.0L617.5,390.0L617.5,385.0L618.0,385.0L618.0,385.5L618.5,385.5L618.5,385.0L619.0,385.0L619.0,385.0L619.5,385.0L619.5,387.5L620.0,387.5L620.0,389.0L620.5,389.0L620.5,389.0L621.0,389.0L621.0,389.0L621.5,389.0L621.5,389.0L622.0,389.0L622.0,390.0L622.5,390.0L622.5,389.0L623.0,389.0L623.0,390.0L623.5,390.0L623.5,390.0L624.0,390.0L624.0,389.0L624.5,389.0L624.5,389.0L625.0,389.0L625.0,386.0L625.5,386.0L625.5,385.0L626.0,385.0L626.0,385.5L626.5,385.5L626.5,386.0L627.0,386.0L627.0,388.5L627.5,388.5L627.5,390.0L628.0,390.0L628.0,389.0L628.5,389.0L628.5,386.8L629.0,386.8L629.0,385.6L629.5,385.6L629.5,382.4L630.0,382.4L630.0,380.2L630.5,380.2L630.5,378.0L631.0,378.0L631.0,375.8L631.5,375.8L631.5,375.8L632.0,375.8L632.0,375.8L632.5,375.8L632.5,371.8L633.0,371.8L633.0,371.8L633.5,371.8L633.5,372.3L634.0,372.3L634.0,372.3L634.5,372.3L634.5,375.3L635.0,375.3L635.0,375.8L635.5,375.8L635.5,376.3L636.0,376.3L636.0,375.8L636.5,375.8L636.5,375.8L637.0,375.8L637.0,375.8L637.5,375.8L637.5,375.8L638.0,375.8L638.0,376.8L638.5,376.8L638.5,375.8L639.0,375.8L639.0,375.8L639.5,375.8L639.5,376.3L640.0,376.3L640.0,371.8L640.5,371.8L640.5,372.8L641.0,372.8L641.0,372.8L641.5,372.8L641.5,372.3L642.0,372.3L642.0,374.3L642.5,374.3L642.5,375.8L643.0,375.8L643.0,375.8L643.5,375.8L643.5,375.8L644.0,375.8L644.0,375.8L644.5,375.8L644.5,375.8L645.0,375.8L645.0,376.3L645.5,376.3L645.5,375.8L646.0,375.8L646.0,376.3L646.5,376.3L646.5,376.3L647.0,376.3L647.0,375.8L647.5,375.8L647.5,371.8L648.0,371.8L648.0,371.8L648.5,371.8L648.5,371.8L649.0,371.8L649.0,371.8L649.5,371.8L649.5,374.8L650.0,374.8L650.0,375.8L650.5,375.8L650.5,378.1L651.0,378.1L651.0,380.4L651.5,380.4L651.5,383.6L652.0,383.6L652.0,384.9L652.5,384.9L652.5,387.7L653.0,387.7L653.0,390.5L653.5,390.5L653.5,390.5L654.0,390.5L654.0,389.5L654.5,389.5L654.5,389.5L655.0,389.5L655.0,385.5L655.5,385.5L655.5,385.5L656.0,385.5L656.0,386.5L656.5,386.5L656.5,385.5L657.0,385.5L657.0,388.0L657.5,388.0L657.5,389.5L658.0,389.5L658.0,389.5L658.5,389.5L658.5,389.5L659.0,389.5L659.0,390.0L659.5,390.0L659.5,389.5L660.0,389.5L660.0,390.5L660.5,390.5L660.5,389.5L661.0,389.5L661.0,389.5L661.5,389.5L661.5,389.5L662.0,389.5L662.0,390.0L662.5,390.0L662.5,385.5L663.0,385.5L663.0,385.5L663.5,385.5L663.5,386.5L664.0,386.5L664.0,385.5L664.5,385.5L664.5,388.0L665.0,388.0L665.0,390.5L665.5,390.5L665.5,389.5L666.0,389.5L666.0,389.5L666.5,389.5L666.5,389.5L667.0,389.5L667.0,390.0L667.5,390.0L667.5,390.5L668.0,390.5L668.0,389.5L668.5,389.5L668.5,387.7L669.0,387.7L669.0,384.9L669.5,384.9L669.5,382.6L670.0,382.6L670.0,376.4L670.5,376.4L670.5,375.1L671.0,375.1L671.0,372.3L671.5,372.3L671.5,372.8L672.0,372.8L672.0,374.8L672.5,374.8L672.5,375.8L673.0,375.8L673.0,376.8L673.5,376.8L673.5,375.8L674.0,375.8L674.0,375.8L674.5,375.8L674.5,376.3L675.0,376.3L675.0,376.3L675.5,376.3L675.5,376.8L676.0,376.8L676.0,375.8L676.5,375.8L676.5,376.3L677.0,376.3L677.0,375.8L677.5,375.8L677.5,372.3L678.0,372.3L678.0,371.8L678.5,371.8L678.5,372.8L679.0,372.8L679.0,372.3L679.5,372.3L679.5,374.3L680.0,374.3L680.0,375.8L680.5,375.8L680.5,375.8L681.0,375.8L681.0,375.8L681.5,375.8L681.5,376.8L682.0,376.8L682.0,375.8L682.5,375.8L682.5,376.3L683.0,376.3L683.0,375.8L683.5,375.8L683.5,376.3L684.0,376.3L684.0,376.8L684.5,376.8L684.5,375.8L685.0,375.8L685.0,371.8L685.5,371.8L685.5,372.3L686.0,372.3L686.0,371.8L686.5,371.8L686.5,372.8L687.0,372.8L687.0,374.8L687.5,374.8L687.5,375.8L688.0,375.8L688.0,375.8L688.5,375.8L688.5,376.8L689.0,376.8L689.0,376.3L689.5,376.3L689.5,375.8L690.0,375.8L690.0,375.8L690.5,375.8L690.5,375.8L691.0,375.8L691.0,375.8L691.5,375.8L691.5,258.7L692.0,258.7L692.0,259.7L692.5,259.7L692.5,87.6L693.0,87.6L693.0,87.6L693.5,87.6L693.5,87.6L694.0,87.6L694.0,188.0L694.5,188.0L694.5,189.0L695.0,189.0L695.0,206.9L695.5,206.9L695.5,204.9L696.0,204.9L696.0,205.9L696.5,205.9L696.5,208.9L697.0,208.9L697.0,214.0L697.5,214.0L697.5,213.0L698.0,213.0L698.0,213.0L698.5,213.0L698.5,213.0L699.0,213.0L699.0,226.0L699.5,226.0L699.5,226.0L700.0,226.0L700.0,229.0L700.5,229.0L700.5,215.0L701.0,215.0L701.0,211.0L701.5,211.0L701.5,213.0L702.0,213.0L702.0,221.8L702.5,221.8L702.5,225.8L703.0,225.8L703.0,225.8L703.5,225.8L703.5,223.8L704.0,223.8L704.0,229.0L704.5,229.0L704.5,227.0L705.0,227.0L705.0,229.0L705.5,229.0L705.5,214.3L706.0,214.3L706.0,216.3L706.5,216.3L706.5,214.3L707.0,214.3L707.0,214.3L707.5,214.3L707.5,214.3L708.0,214.3L708.0,369.5L708.5,369.5L708.5,370.0L709.0,370.0L709.0,366.5L709.5,366.5L709.5,366.5L710.0,366.5L710.0,366.0L710.5,366.0L710.5,366.5L711.0,366.5L711.0,368.0L711.5,368.0L711.5,369.5L712.0,369.5L712.0,370.0L712.5,370.0L712.5,370.5L713.0,370.5L713.0,370.5L713.5,370.5L713.5,369.5L714.0,369.5L714.0,369.5L714.5,369.5L714.5,370.5L715.0,370.5L715.0,370.5L715.5,370.5L715.5,369.5L716.0,369.5L716.0,369.5L716.5,369.5L716.5,366.5L717.0,366.5L717.0,365.5L717.5,365.5L717.5,365.5L718.0,365.5L718.0,365.5L718.5,365.5L718.5,368.0L719.0,368.0L719.0,370.0L719.5,370.0L719.5,370.5L720.0,370.5L720.0,369.5L720.5,369.5L720.5,370.5L721.0,370.5L721.0,369.5L721.5,369.5L721.5,369.5L722.0,369.5L722.0,369.5L722.5,369.5L722.5,369.5L723.0,369.5L723.0,370.0L723.5,370.0L723.5,369.5L724.0,369.5L724.0,365.5L724.5,365.5L724.5,365.5L725.0,365.5L725.0,365.5L725.5,365.5L725.5,366.5L726.0,366.5L726.0,368.5L726.5,368.5L726.5,369.5L727.0,369.5L727.0,369.5L727.5,369.5L727.5,369.5L728.0,369.5L728.0,370.5L728.5,370.5L728.5,369.5L729.0,369.5L729.0,283.9L729.5,283.9L729.5,282.9L730.0,282.9L730.0,214.0L730.5,214.0L730.5,212.0L731.0,212.0L731.0,210.0L731.5,210.0L731.5,218.5L732.0,218.5L732.0,219.5L732.5,219.5L732.5,217.5L733.0,217.5L733.0,224.8L733.5,224.8L733.5,222.8L734.0,222.8L734.0,222.8L734.5,222.8L734.5,223.8L735.0,223.8L735.0,225.0L735.5,225.0L735.5,227.0L736.0,227.0L736.0,228.0L736.5,228.0L736.5,258.6L737.0,258.6L737.0,256.6L737.5,256.6L737.5,196.4L738.0,196.4L738.0,194.4L738.5,194.4L738.5,196.4L739.0,196.4L739.0,194.4L739.5,194.4L739.5,197.4L740.0,197.4L740.0,202.6L740.5,202.6L740.5,199.6L741.0,199.6L741.0,232.0L741.5,232.0L741.5,230.0L742.0,230.0L742.0,202.7L742.5,202.7L742.5,203.7L743.0,203.7L743.0,200.7L743.5,200.7L743.5,203.7L744.0,203.7L744.0,220.7L744.5,220.7L744.5,224.7L745.0,224.7L745.0,223.7L745.5,223.7L745.5,371.5L746.0,371.5L746.0,371.5L746.5,371.5L746.5,371.5L747.0,371.5L747.0,367.5L747.5,367.5L747.5,368.5L748.0,368.5L748.0,368.0L748.5,368.0L748.5,368.5L749.0,368.5L749.0,370.5L749.5,370.5L749.5,371.5L750.0,371.5L750.0,371.5L750.5,371.5L750.5,372.5L751.0,372.5L751.0,371.5L751.5,371.5L751.5,371.5L752.0,371.5L752.0,371.5L752.5,371.5L752.5,371.5L753.0,371.5L753.0,371.5L753.5,371.5L753.5,371.5L754.0,371.5L754.0,372.0L754.5,372.0L754.5,368.5L755.0,368.5L755.0,367.5L755.5,367.5L755.5,368.5L756.0,368.5L756.0,368.0L756.5,368.0L756.5,370.0L757.0,370.0L757.0,372.5L757.5,372.5L757.5,371.5L758.0,371.5L758.0,371.5L758.5,371.5L758.5,371.5L759.0,371.5L759.0,372.0L759.5,372.0L759.5,372.0L760.0,372.0L760.0,372.5L760.5,372.5L760.5,372.0L761.0,372.0L761.0,371.5L761.5,371.5L761.5,372.5L762.0,372.5L762.0,367.5L762.5,367.5L762.5,368.0L763.0,368.0L763.0,367.5L763.5,367.5L763.5,368.5L764.0,368.5L764.0,371.0L764.5,371.0L764.5,372.5L765.0,372.5L765.0,371.5L765.5,371.5L765.5,372.0L766.0,372.0L766.0,372.5L766.5,372.5L766.5,371.5L767.0,371.5L767.0,246.0L767.5,246.0L767.5,248.0L768.0,248.0L768.0,233.0L768.5,233.0L768.5,232.0L769.0,232.0L769.0,221.8L769.5,221.8L769.5,224.8L770.0,224.8L770.0,221.8L770.5,221.8L770.5,222.8L771.0,222.8L771.0,225.0L771.5,225.0L771.5,226.0L772.0,226.0L772.0,226.0L772.5,226.0L772.5,228.0L773.0,228.0L773.0,240.6L773.5,240.6L773.5,240.6L774.0,240.6L774.0,376.8L774.5,376.8L774.5,376.0L775.0,376.0L775.0,376.0L775.5,376.0L775.5,228.0L776.0,228.0L776.0,226.0L776.5,226.0L776.5,228.0L777.0,228.0L777.0,231.0L777.5,231.0L777.5,233.0L778.0,233.0L778.0,214.0L778.5,214.0L778.5,212.0L779.0,212.0L779.0,212.0L779.5,212.0L779.5,212.0L780.0,212.0L780.0,222.8L780.5,222.8L780.5,225.8L781.0,225.8L781.0,215.3L781.5,215.3L781.5,216.3L782.0,216.3L782.0,213.3L782.5,213.3L782.5,373.0L783.0,373.0L783.0,373.0L783.5,373.0L783.5,369.0L784.0,369.0L784.0,369.0L784.5,369.0L784.5,369.0L785.0,369.0L785.0,369.5L785.5,369.5L785.5,371.5L786.0,371.5L786.0,374.0L786.5,374.0L786.5,373.5L787.0,373.5L787.0,373.0L787.5,373.0L787.5,373.0L788.0,373.0L788.0,373.0L788.5,373.0L788.5,373.5L789.0,373.5L789.0,373.0L789.5,373.0L789.5,374.0L790.0,374.0L790.0,373.5L790.5,373.5L790.5,373.0L791.0,373.0L791.0,369.5L791.5,369.5L791.5,369.5L792.0,369.5L792.0,369.0L792.5,369.0L792.5,369.0L793.0,369.0L793.0,371.5L793.5,371.5L793.5,373.5L794.0,373.5L794.0,373.0L794.5,373.0L794.5,373.0L795.0,373.0L795.0,373.5L795.5,373.5L795.5,373.0L796.0,373.0L796.0,373.0L796.5,373.0L796.5,373.5L797.0,373.5L797.0,373.0L797.5,373.0L797.5,373.0L798.0,373.0L798.0,373.0L798.5,373.0L798.5,369.0L799.0,369.0L799.0,369.0L799.5,369.0L799.5,369.0L800.0,369.0L800.0,369.0L800.5,369.0L800.5,372.0L801.0,372.0L801.0,373.0L801.5,373.0L801.5,373.0L802.0,373.0L802.0,373.0L802.5,373.0L802.5,374.0L803.0,374.0L803.0,374.0L803.5,374.0L803.5,373.5L804.0,373.5L804.0,374.0L804.5,374.0L804.5,260.8L805.0,260.8L805.0,262.8L805.5,262.8L805.5,230.0L806.0,230.0L806.0,232.0L806.5,232.0L806.5,239.6L807.0,239.6L807.0,241.6L807.5,241.6L807.5,237.6L808.0,237.6L808.0,235.3L808.5,235.3L808.5,236.3L809.0,236.3L809.0,252.0L809.5,252.0L809.5,249.0L810.0,249.0L810.0,250.0L810.5,250.0L810.5,252.0L811.0,252.0L811.0,260.6L811.5,260.6L811.5,258.6L812.0,258.6L812.0,258.6L812.5,258.6L812.5,271.0L813.0,271.0L813.0,270.0L813.5,270.0L813.5,245.8L814.0,245.8L814.0,241.8L814.5,241.8L814.5,243.8L815.0,243.8L815.0,256.4L815.5,256.4L815.5,258.4L816.0,258.4L816.0,242.6L816.5,242.6L816.5,242.6L817.0,242.6L817.0,240.6L817.5,240.6L817.5,239.6L818.0,239.6L818.0,431.3Z" fill="#e08818"/><path d="M414,431.3 L414.0,408.2L414.5,408.2L414.5,407.7L415.0,407.7L415.0,408.2L415.5,408.2L415.5,407.7L416.0,407.7L416.0,407.7L416.5,407.7L416.5,407.7L417.0,407.7L417.0,407.7L417.5,407.7L417.5,407.7L418.0,407.7L418.0,408.2L418.5,408.2L418.5,408.2L419.0,408.2L419.0,407.7L419.5,407.7L419.5,408.7L420.0,408.7L420.0,408.2L420.5,408.2L420.5,408.2L421.0,408.2L421.0,407.7L421.5,407.7L421.5,407.7L422.0,407.7L422.0,408.2L422.5,408.2L422.5,407.7L423.0,407.7L423.0,407.7L423.5,407.7L423.5,407.7L424.0,407.7L424.0,407.7L424.5,407.7L424.5,407.7L425.0,407.7L425.0,408.7L425.5,408.7L425.5,407.7L426.0,407.7L426.0,407.7L426.5,407.7L426.5,407.7L427.0,407.7L427.0,407.7L427.5,407.7L427.5,408.2L428.0,408.2L428.0,407.7L428.5,407.7L428.5,205.0L429.0,205.0L429.0,178.3L429.5,178.3L429.5,179.3L430.0,179.3L430.0,179.8L430.5,179.8L430.5,291.8L431.0,291.8L431.0,291.8L431.5,291.8L431.5,292.8L432.0,292.8L432.0,293.3L432.5,293.3L432.5,291.8L433.0,291.8L433.0,298.1L433.5,298.1L433.5,298.6L434.0,298.6L434.0,298.1L434.5,298.1L434.5,299.6L435.0,299.6L435.0,298.6L435.5,298.6L435.5,298.6L436.0,298.6L436.0,281.2L436.5,281.2L436.5,281.2L437.0,281.2L437.0,281.2L437.5,281.2L437.5,281.7L438.0,281.7L438.0,281.7L438.5,281.7L438.5,281.7L439.0,281.7L439.0,282.7L439.5,282.7L439.5,282.7L440.0,282.7L440.0,286.0L440.5,286.0L440.5,285.0L441.0,285.0L441.0,286.0L441.5,286.0L441.5,285.0L442.0,285.0L442.0,285.0L442.5,285.0L442.5,285.0L443.0,285.0L443.0,285.5L443.5,285.5L443.5,393.8L444.0,393.8L444.0,393.3L444.5,393.3L444.5,393.3L445.0,393.3L445.0,393.3L445.5,393.3L445.5,394.3L446.0,394.3L446.0,393.3L446.5,393.3L446.5,393.3L447.0,393.3L447.0,393.3L447.5,393.3L447.5,393.3L448.0,393.3L448.0,393.8L448.5,393.8L448.5,394.3L449.0,394.3L449.0,393.3L449.5,393.3L449.5,393.3L450.0,393.3L450.0,393.3L450.5,393.3L450.5,393.3L451.0,393.3L451.0,393.3L451.5,393.3L451.5,393.3L452.0,393.3L452.0,393.3L452.5,393.3L452.5,393.3L453.0,393.3L453.0,393.3L453.5,393.3L453.5,393.8L454.0,393.8L454.0,394.3L454.5,394.3L454.5,393.3L455.0,393.3L455.0,393.3L455.5,393.3L455.5,393.3L456.0,393.3L456.0,393.3L456.5,393.3L456.5,393.8L457.0,393.8L457.0,393.3L457.5,393.3L457.5,393.3L458.0,393.3L458.0,393.8L458.5,393.8L458.5,393.3L459.0,393.3L459.0,393.3L459.5,393.3L459.5,393.3L460.0,393.3L460.0,393.3L460.5,393.3L460.5,393.3L461.0,393.3L461.0,393.3L461.5,393.3L461.5,393.3L462.0,393.3L462.0,393.3L462.5,393.3L462.5,394.3L463.0,394.3L463.0,393.3L463.5,393.3L463.5,393.3L464.0,393.3L464.0,393.8L464.5,393.8L464.5,393.3L465.0,393.3L465.0,393.3L465.5,393.3L465.5,393.3L466.0,393.3L466.0,284.9L466.5,284.9L466.5,283.4L467.0,283.4L467.0,283.4L467.5,283.4L467.5,284.9L468.0,284.9L468.0,284.9L468.5,284.9L468.5,283.9L469.0,283.9L469.0,252.5L469.5,252.5L469.5,253.0L470.0,253.0L470.0,288.0L470.5,288.0L470.5,289.0L471.0,289.0L471.0,289.0L471.5,289.0L471.5,288.0L472.0,288.0L472.0,288.5L472.5,288.5L472.5,287.5L473.0,287.5L473.0,289.0L473.5,289.0L473.5,287.5L474.0,287.5L474.0,296.5L474.5,296.5L474.5,296.5L475.0,296.5L475.0,296.5L475.5,296.5L475.5,296.0L476.0,296.0L476.0,272.8L476.5,272.8L476.5,273.3L477.0,273.3L477.0,272.8L477.5,272.8L477.5,272.8L478.0,272.8L478.0,272.8L478.5,272.8L478.5,273.8L479.0,273.8L479.0,273.3L479.5,273.3L479.5,273.3L480.0,273.3L480.0,279.6L480.5,279.6L480.5,279.6L481.0,279.6L481.0,279.1L481.5,279.1L481.5,280.1L482.0,280.1L482.0,295.5L482.5,295.5L482.5,296.0L483.0,296.0L483.0,393.3L483.5,393.3L483.5,393.3L484.0,393.3L484.0,393.8L484.5,393.8L484.5,394.3L485.0,394.3L485.0,393.3L485.5,393.3L485.5,393.3L486.0,393.3L486.0,393.3L486.5,393.3L486.5,393.3L487.0,393.3L487.0,393.3L487.5,393.3L487.5,393.3L488.0,393.3L488.0,393.8L488.5,393.8L488.5,393.3L489.0,393.3L489.0,393.3L489.5,393.3L489.5,393.8L490.0,393.8L490.0,393.3L490.5,393.3L490.5,393.3L491.0,393.3L491.0,393.3L491.5,393.3L491.5,393.3L492.0,393.3L492.0,394.3L492.5,394.3L492.5,393.8L493.0,393.8L493.0,393.3L493.5,393.3L493.5,393.3L494.0,393.3L494.0,393.3L494.5,393.3L494.5,393.3L495.0,393.3L495.0,393.3L495.5,393.3L495.5,393.3L496.0,393.3L496.0,393.3L496.5,393.3L496.5,393.8L497.0,393.8L497.0,393.3L497.5,393.3L497.5,393.3L498.0,393.3L498.0,393.3L498.5,393.3L498.5,394.3L499.0,394.3L499.0,393.8L499.5,393.8L499.5,393.8L500.0,393.8L500.0,393.3L500.5,393.3L500.5,393.3L501.0,393.3L501.0,393.3L501.5,393.3L501.5,393.8L502.0,393.8L502.0,393.3L502.5,393.3L502.5,394.3L503.0,394.3L503.0,290.0L503.5,290.0L503.5,289.5L504.0,289.5L504.0,290.0L504.5,290.0L504.5,283.3L505.0,283.3L505.0,283.8L505.5,283.8L505.5,283.3L506.0,283.3L506.0,282.3L506.5,282.3L506.5,282.8L507.0,282.8L507.0,287.0L507.5,287.0L507.5,286.0L508.0,286.0L508.0,286.0L508.5,286.0L508.5,286.0L509.0,286.0L509.0,286.0L509.5,286.0L509.5,287.0L510.0,287.0L510.0,296.5L510.5,296.5L510.5,296.5L511.0,296.5L511.0,296.5L511.5,296.5L511.5,296.0L512.0,296.0L512.0,290.0L512.5,290.0L512.5,289.5L513.0,289.5L513.0,281.7L513.5,281.7L513.5,281.7L514.0,281.7L514.0,281.2L514.5,281.2L514.5,282.2L515.0,282.2L515.0,290.0L515.5,290.0L515.5,288.5L516.0,288.5L516.0,289.5L516.5,289.5L516.5,290.0L517.0,290.0L517.0,289.0L517.5,289.0L517.5,289.5L518.0,289.5L518.0,289.5L518.5,289.5L518.5,288.5L519.0,288.5L519.0,393.3L519.5,393.3L519.5,393.3L520.0,393.3L520.0,393.3L520.5,393.3L520.5,393.3L521.0,393.3L521.0,394.3L521.5,394.3L521.5,393.3L522.0,393.3L522.0,393.3L522.5,393.3L522.5,393.3L523.0,393.3L523.0,393.3L523.5,393.3L523.5,393.8L524.0,393.8L524.0,393.8L524.5,393.8L524.5,393.3L525.0,393.3L525.0,393.3L525.5,393.3L525.5,393.3L526.0,393.3L526.0,393.3L526.5,393.3L526.5,393.3L527.0,393.3L527.0,394.3L527.5,394.3L527.5,393.3L528.0,393.3L528.0,393.3L528.5,393.3L528.5,393.3L529.0,393.3L529.0,393.3L529.5,393.3L529.5,393.8L530.0,393.8L530.0,393.3L530.5,393.3L530.5,393.3L531.0,393.3L531.0,393.3L531.5,393.3L531.5,394.3L532.0,394.3L532.0,393.3L532.5,393.3L532.5,394.3L533.0,394.3L533.0,393.3L533.5,393.3L533.5,393.3L534.0,393.3L534.0,393.3L534.5,393.3L534.5,393.3L535.0,393.3L535.0,393.3L535.5,393.3L535.5,394.3L536.0,394.3L536.0,393.3L536.5,393.3L536.5,393.3L537.0,393.3L537.0,394.3L537.5,394.3L537.5,393.3L538.0,393.3L538.0,393.3L538.5,393.3L538.5,393.3L539.0,393.3L539.0,393.8L539.5,393.8L539.5,393.3L540.0,393.3L540.0,393.3L540.5,393.3L540.5,393.3L541.0,393.3L541.0,394.3L541.5,394.3L541.5,289.0L542.0,289.0L542.0,288.0L542.5,288.0L542.5,288.5L543.0,288.5L543.0,288.0L543.5,288.0L543.5,288.0L544.0,288.0L544.0,289.0L544.5,289.0L544.5,289.0L545.0,289.0L545.0,288.5L545.5,288.5L545.5,289.0L546.0,289.0L546.0,281.7L546.5,281.7L546.5,281.7L547.0,281.7L547.0,281.7L547.5,281.7L547.5,281.7L548.0,281.7L548.0,288.0L548.5,288.0L548.5,288.0L549.0,288.0L549.0,371.5L549.5,371.5L549.5,286.5L550.0,286.5L550.0,287.5L550.5,287.5L550.5,287.0L551.0,287.0L551.0,287.5L551.5,287.5L551.5,287.0L552.0,287.0L552.0,287.0L552.5,287.0L552.5,288.0L553.0,288.0L553.0,284.9L553.5,284.9L553.5,283.9L554.0,283.9L554.0,284.4L554.5,284.4L554.5,284.4L555.0,284.4L555.0,283.9L555.5,283.9L555.5,283.9L556.0,283.9L556.0,284.4L556.5,284.4L556.5,393.3L557.0,393.3L557.0,393.3L557.5,393.3L557.5,393.3L558.0,393.3L558.0,393.3L558.5,393.3L558.5,393.3L559.0,393.3L559.0,393.3L559.5,393.3L559.5,394.3L560.0,394.3L560.0,393.3L560.5,393.3L560.5,393.3L561.0,393.3L561.0,393.3L561.5,393.3L561.5,393.3L562.0,393.3L562.0,393.8L562.5,393.8L562.5,393.3L563.0,393.3L563.0,393.3L563.5,393.3L563.5,393.3L564.0,393.3L564.0,393.3L564.5,393.3L564.5,393.3L565.0,393.3L565.0,393.3L565.5,393.3L565.5,394.3L566.0,394.3L566.0,393.3L566.5,393.3L566.5,394.3L567.0,394.3L567.0,394.3L567.5,394.3L567.5,393.3L568.0,393.3L568.0,393.3L568.5,393.3L568.5,393.3L569.0,393.3L569.0,394.3L569.5,394.3L569.5,393.3L570.0,393.3L570.0,394.3L570.5,394.3L570.5,393.3L571.0,393.3L571.0,393.3L571.5,393.3L571.5,393.8L572.0,393.8L572.0,393.8L572.5,393.8L572.5,393.3L573.0,393.3L573.0,394.3L573.5,394.3L573.5,393.3L574.0,393.3L574.0,394.3L574.5,394.3L574.5,393.3L575.0,393.3L575.0,393.3L575.5,393.3L575.5,394.3L576.0,394.3L576.0,393.3L576.5,393.3L576.5,393.8L577.0,393.8L577.0,393.3L577.5,393.3L577.5,393.3L578.0,393.3L578.0,393.3L578.5,393.3L578.5,393.3L579.0,393.3L579.0,299.6L579.5,299.6L579.5,298.6L580.0,298.6L580.0,283.8L580.5,283.8L580.5,282.8L581.0,282.8L581.0,282.8L581.5,282.8L581.5,282.8L582.0,282.8L582.0,282.8L582.5,282.8L582.5,282.3L583.0,282.3L583.0,286.0L583.5,286.0L583.5,285.0L584.0,285.0L584.0,285.0L584.5,285.0L584.5,284.5L585.0,284.5L585.0,285.0L585.5,285.0L585.5,284.5L586.0,284.5L586.0,284.9L586.5,284.9L586.5,283.9L587.0,283.9L587.0,284.9L587.5,284.9L587.5,284.4L588.0,284.4L588.0,290.0L588.5,290.0L588.5,289.0L589.0,289.0L589.0,289.0L589.5,289.0L589.5,289.0L590.0,289.0L590.0,289.5L590.5,289.5L590.5,290.0L591.0,290.0L591.0,290.5L591.5,290.5L591.5,291.0L592.0,291.0L592.0,291.0L592.5,291.0L592.5,290.5L593.0,290.5L593.0,289.5L593.5,289.5L593.5,396.4L594.0,396.4L594.0,396.4L594.5,396.4L594.5,396.4L595.0,396.4L595.0,397.4L595.5,397.4L595.5,396.4L596.0,396.4L596.0,396.4L596.5,396.4L596.5,396.4L597.0,396.4L597.0,396.9L597.5,396.9L597.5,396.4L598.0,396.4L598.0,396.4L598.5,396.4L598.5,396.4L599.0,396.4L599.0,396.4L599.5,396.4L599.5,396.9L600.0,396.9L600.0,397.4L600.5,397.4L600.5,396.4L601.0,396.4L601.0,396.9L601.5,396.9L601.5,397.4L602.0,397.4L602.0,396.4L602.5,396.4L602.5,397.4L603.0,397.4L603.0,396.4L603.5,396.4L603.5,396.9L604.0,396.9L604.0,396.4L604.5,396.4L604.5,397.4L605.0,397.4L605.0,396.9L605.5,396.9L605.5,396.9L606.0,396.9L606.0,396.4L606.5,396.4L606.5,396.9L607.0,396.9L607.0,396.4L607.5,396.4L607.5,396.9L608.0,396.9L608.0,396.4L608.5,396.4L608.5,396.4L609.0,396.4L609.0,396.4L609.5,396.4L609.5,396.4L610.0,396.4L610.0,396.4L610.5,396.4L610.5,396.4L611.0,396.4L611.0,396.9L611.5,396.9L611.5,396.9L612.0,396.9L612.0,396.9L612.5,396.9L612.5,396.4L613.0,396.4L613.0,396.4L613.5,396.4L613.5,396.4L614.0,396.4L614.0,396.4L614.5,396.4L614.5,396.4L615.0,396.4L615.0,396.4L615.5,396.4L615.5,396.4L616.0,396.4L616.0,396.4L616.5,396.4L616.5,396.4L617.0,396.4L617.0,396.4L617.5,396.4L617.5,396.4L618.0,396.4L618.0,396.9L618.5,396.9L618.5,396.4L619.0,396.4L619.0,397.4L619.5,397.4L619.5,396.4L620.0,396.4L620.0,396.4L620.5,396.4L620.5,396.4L621.0,396.4L621.0,396.4L621.5,396.4L621.5,396.4L622.0,396.4L622.0,396.4L622.5,396.4L622.5,396.4L623.0,396.4L623.0,396.4L623.5,396.4L623.5,396.9L624.0,396.9L624.0,397.4L624.5,397.4L624.5,397.4L625.0,397.4L625.0,396.4L625.5,396.4L625.5,396.4L626.0,396.4L626.0,396.9L626.5,396.9L626.5,396.4L627.0,396.4L627.0,396.4L627.5,396.4L627.5,397.4L628.0,397.4L628.0,396.9L628.5,396.9L628.5,396.9L629.0,396.9L629.0,396.9L629.5,396.9L629.5,396.4L630.0,396.4L630.0,396.4L630.5,396.4L630.5,396.9L631.0,396.9L631.0,396.4L631.5,396.4L631.5,396.4L632.0,396.4L632.0,396.4L632.5,396.4L632.5,396.4L633.0,396.4L633.0,396.4L633.5,396.4L633.5,396.4L634.0,396.4L634.0,396.4L634.5,396.4L634.5,397.4L635.0,397.4L635.0,396.4L635.5,396.4L635.5,397.4L636.0,397.4L636.0,396.4L636.5,396.4L636.5,396.9L637.0,396.9L637.0,396.4L637.5,396.4L637.5,397.4L638.0,397.4L638.0,397.4L638.5,397.4L638.5,396.9L639.0,396.9L639.0,396.4L639.5,396.4L639.5,396.4L640.0,396.4L640.0,396.4L640.5,396.4L640.5,396.9L641.0,396.9L641.0,396.9L641.5,396.9L641.5,396.4L642.0,396.4L642.0,396.4L642.5,396.4L642.5,396.4L643.0,396.4L643.0,396.4L643.5,396.4L643.5,397.4L644.0,397.4L644.0,396.9L644.5,396.9L644.5,396.4L645.0,396.4L645.0,396.4L645.5,396.4L645.5,396.4L646.0,396.4L646.0,396.4L646.5,396.4L646.5,396.9L647.0,396.9L647.0,396.4L647.5,396.4L647.5,396.9L648.0,396.9L648.0,396.4L648.5,396.4L648.5,396.4L649.0,396.4L649.0,396.4L649.5,396.4L649.5,396.4L650.0,396.4L650.0,396.4L650.5,396.4L650.5,396.9L651.0,396.9L651.0,396.4L651.5,396.4L651.5,396.4L652.0,396.4L652.0,396.4L652.5,396.4L652.5,396.9L653.0,396.9L653.0,396.4L653.5,396.4L653.5,396.9L654.0,396.9L654.0,396.4L654.5,396.4L654.5,396.4L655.0,396.4L655.0,396.4L655.5,396.4L655.5,396.4L656.0,396.4L656.0,397.4L656.5,397.4L656.5,396.4L657.0,396.4L657.0,396.4L657.5,396.4L657.5,397.4L658.0,397.4L658.0,396.4L658.5,396.4L658.5,396.4L659.0,396.4L659.0,396.4L659.5,396.4L659.5,396.4L660.0,396.4L660.0,396.4L660.5,396.4L660.5,396.4L661.0,396.4L661.0,396.4L661.5,396.4L661.5,397.4L662.0,397.4L662.0,396.9L662.5,396.9L662.5,396.9L663.0,396.9L663.0,396.4L663.5,396.4L663.5,396.4L664.0,396.4L664.0,397.4L664.5,397.4L664.5,396.4L665.0,396.4L665.0,396.4L665.5,396.4L665.5,396.9L666.0,396.9L666.0,397.4L666.5,397.4L666.5,396.4L667.0,396.4L667.0,396.4L667.5,396.4L667.5,396.4L668.0,396.4L668.0,397.4L668.5,397.4L668.5,396.4L669.0,396.4L669.0,396.4L669.5,396.4L669.5,396.4L670.0,396.4L670.0,396.9L670.5,396.9L670.5,396.9L671.0,396.9L671.0,396.9L671.5,396.9L671.5,396.4L672.0,396.4L672.0,397.4L672.5,397.4L672.5,396.9L673.0,396.9L673.0,397.4L673.5,397.4L673.5,396.4L674.0,396.4L674.0,396.4L674.5,396.4L674.5,396.4L675.0,396.4L675.0,396.9L675.5,396.9L675.5,396.9L676.0,396.9L676.0,396.4L676.5,396.4L676.5,396.4L677.0,396.4L677.0,396.9L677.5,396.9L677.5,396.9L678.0,396.9L678.0,396.4L678.5,396.4L678.5,396.4L679.0,396.4L679.0,397.4L679.5,397.4L679.5,396.9L680.0,396.9L680.0,397.4L680.5,397.4L680.5,396.4L681.0,396.4L681.0,396.4L681.5,396.4L681.5,396.4L682.0,396.4L682.0,396.4L682.5,396.4L682.5,396.4L683.0,396.4L683.0,397.4L683.5,397.4L683.5,396.4L684.0,396.4L684.0,397.4L684.5,397.4L684.5,396.4L685.0,396.4L685.0,396.4L685.5,396.4L685.5,396.4L686.0,396.4L686.0,396.4L686.5,396.4L686.5,396.4L687.0,396.4L687.0,396.4L687.5,396.4L687.5,396.9L688.0,396.9L688.0,396.4L688.5,396.4L688.5,396.4L689.0,396.4L689.0,396.4L689.5,396.4L689.5,396.4L690.0,396.4L690.0,396.9L690.5,396.9L690.5,396.4L691.0,396.4L691.0,396.4L691.5,396.4L691.5,284.5L692.0,284.5L692.0,285.0L692.5,285.0L692.5,167.0L693.0,167.0L693.0,167.5L693.5,167.5L693.5,168.0L694.0,168.0L694.0,285.5L694.5,285.5L694.5,286.5L695.0,286.5L695.0,288.5L695.5,288.5L695.5,289.0L696.0,289.0L696.0,287.5L696.5,287.5L696.5,288.5L697.0,288.5L697.0,291.0L697.5,291.0L697.5,290.0L698.0,290.0L698.0,289.5L698.5,289.5L698.5,291.0L699.0,291.0L699.0,298.6L699.5,298.6L699.5,298.6L700.0,298.6L700.0,298.6L700.5,298.6L700.5,291.5L701.0,291.5L701.0,290.5L701.5,290.5L701.5,291.0L702.0,291.0L702.0,288.5L702.5,288.5L702.5,287.5L703.0,287.5L703.0,288.0L703.5,288.0L703.5,287.5L704.0,287.5L704.0,290.0L704.5,290.0L704.5,290.0L705.0,290.0L705.0,290.0L705.5,290.0L705.5,297.5L706.0,297.5L706.0,296.0L706.5,296.0L706.5,297.0L707.0,297.0L707.0,301.2L707.5,301.2L707.5,301.2L708.0,301.2L708.0,394.3L708.5,394.3L708.5,393.3L709.0,393.3L709.0,393.3L709.5,393.3L709.5,394.3L710.0,394.3L710.0,393.3L710.5,393.3L710.5,393.3L711.0,393.3L711.0,394.3L711.5,394.3L711.5,393.3L712.0,393.3L712.0,393.3L712.5,393.3L712.5,393.3L713.0,393.3L713.0,393.8L713.5,393.8L713.5,393.3L714.0,393.3L714.0,393.8L714.5,393.8L714.5,394.3L715.0,394.3L715.0,393.3L715.5,393.3L715.5,393.3L716.0,393.3L716.0,393.3L716.5,393.3L716.5,394.3L717.0,394.3L717.0,394.3L717.5,394.3L717.5,394.3L718.0,394.3L718.0,393.3L718.5,393.3L718.5,393.3L719.0,393.3L719.0,393.3L719.5,393.3L719.5,393.3L720.0,393.3L720.0,393.3L720.5,393.3L720.5,393.3L721.0,393.3L721.0,393.3L721.5,393.3L721.5,393.8L722.0,393.8L722.0,394.3L722.5,394.3L722.5,393.3L723.0,393.3L723.0,393.3L723.5,393.3L723.5,393.3L724.0,393.3L724.0,393.3L724.5,393.3L724.5,393.3L725.0,393.3L725.0,393.3L725.5,393.3L725.5,393.3L726.0,393.3L726.0,393.3L726.5,393.3L726.5,393.3L727.0,393.3L727.0,393.3L727.5,393.3L727.5,394.3L728.0,394.3L728.0,393.3L728.5,393.3L728.5,393.8L729.0,393.8L729.0,298.6L729.5,298.6L729.5,298.1L730.0,298.1L730.0,284.5L730.5,284.5L730.5,285.5L731.0,285.5L731.0,286.0L731.5,286.0L731.5,284.0L732.0,284.0L732.0,284.0L732.5,284.0L732.5,284.5L733.0,284.5L733.0,284.5L733.5,284.5L733.5,284.0L734.0,284.0L734.0,284.0L734.5,284.0L734.5,284.5L735.0,284.5L735.0,285.0L735.5,285.0L735.5,285.5L736.0,285.5L736.0,284.5L736.5,284.5L736.5,300.7L737.0,300.7L737.0,301.7L737.5,301.7L737.5,285.0L738.0,285.0L738.0,284.0L738.5,284.0L738.5,284.0L739.0,284.0L739.0,284.0L739.5,284.0L739.5,284.5L740.0,284.5L740.0,283.5L740.5,283.5L740.5,284.0L741.0,284.0L741.0,287.5L741.5,287.5L741.5,288.0L742.0,288.0L742.0,288.0L742.5,288.0L742.5,288.0L743.0,288.0L743.0,288.0L743.5,288.0L743.5,288.0L744.0,288.0L744.0,300.7L744.5,300.7L744.5,301.2L745.0,301.2L745.0,301.2L745.5,301.2L745.5,393.3L746.0,393.3L746.0,393.8L746.5,393.8L746.5,393.3L747.0,393.3L747.0,393.3L747.5,393.3L747.5,393.3L748.0,393.3L748.0,393.8L748.5,393.8L748.5,393.3L749.0,393.3L749.0,393.3L749.5,393.3L749.5,393.3L750.0,393.3L750.0,393.3L750.5,393.3L750.5,393.3L751.0,393.3L751.0,393.3L751.5,393.3L751.5,393.3L752.0,393.3L752.0,393.3L752.5,393.3L752.5,394.3L753.0,394.3L753.0,393.3L753.5,393.3L753.5,393.3L754.0,393.3L754.0,393.8L754.5,393.8L754.5,394.3L755.0,394.3L755.0,393.3L755.5,393.3L755.5,393.3L756.0,393.3L756.0,393.3L756.5,393.3L756.5,393.3L757.0,393.3L757.0,393.3L757.5,393.3L757.5,393.3L758.0,393.3L758.0,393.3L758.5,393.3L758.5,394.3L759.0,394.3L759.0,393.8L759.5,393.8L759.5,393.3L760.0,393.3L760.0,393.3L760.5,393.3L760.5,393.8L761.0,393.8L761.0,393.8L761.5,393.8L761.5,393.3L762.0,393.3L762.0,393.3L762.5,393.3L762.5,393.3L763.0,393.3L763.0,393.3L763.5,393.3L763.5,393.3L764.0,393.3L764.0,393.3L764.5,393.3L764.5,393.3L765.0,393.3L765.0,394.3L765.5,394.3L765.5,393.3L766.0,393.3L766.0,393.8L766.5,393.8L766.5,393.8L767.0,393.8L767.0,308.0L767.5,308.0L767.5,308.0L768.0,308.0L768.0,292.0L768.5,292.0L768.5,292.0L769.0,292.0L769.0,287.0L769.5,287.0L769.5,287.0L770.0,287.0L770.0,287.0L770.5,287.0L770.5,287.0L771.0,287.0L771.0,286.0L771.5,286.0L771.5,286.0L772.0,286.0L772.0,285.0L772.5,285.0L772.5,286.0L773.0,286.0L773.0,286.0L773.5,286.0L773.5,284.5L774.0,284.5L774.0,376.8L774.5,376.8L774.5,377.3L775.0,377.3L775.0,376.8L775.5,376.8L775.5,285.5L776.0,285.5L776.0,286.0L776.5,286.0L776.5,285.0L777.0,285.0L777.0,285.0L777.5,285.0L777.5,284.5L778.0,284.5L778.0,285.5L778.5,285.5L778.5,285.5L779.0,285.5L779.0,286.0L779.5,286.0L779.5,287.0L780.0,287.0L780.0,286.5L780.5,286.5L780.5,285.5L781.0,285.5L781.0,297.5L781.5,297.5L781.5,297.5L782.0,297.5L782.0,297.5L782.5,297.5L782.5,393.3L783.0,393.3L783.0,393.3L783.5,393.3L783.5,393.3L784.0,393.3L784.0,393.3L784.5,393.3L784.5,393.3L785.0,393.3L785.0,393.3L785.5,393.3L785.5,393.3L786.0,393.3L786.0,393.3L786.5,393.3L786.5,393.3L787.0,393.3L787.0,393.3L787.5,393.3L787.5,394.3L788.0,394.3L788.0,393.3L788.5,393.3L788.5,393.8L789.0,393.8L789.0,394.3L789.5,394.3L789.5,393.3L790.0,393.3L790.0,394.3L790.5,394.3L790.5,393.3L791.0,393.3L791.0,393.3L791.5,393.3L791.5,393.8L792.0,393.8L792.0,393.8L792.5,393.8L792.5,394.3L793.0,394.3L793.0,393.3L793.5,393.3L793.5,393.3L794.0,393.3L794.0,393.3L794.5,393.3L794.5,394.3L795.0,394.3L795.0,394.3L795.5,394.3L795.5,393.3L796.0,393.3L796.0,393.3L796.5,393.3L796.5,393.8L797.0,393.8L797.0,393.3L797.5,393.3L797.5,393.3L798.0,393.3L798.0,394.3L798.5,394.3L798.5,393.3L799.0,393.3L799.0,393.3L799.5,393.3L799.5,393.3L800.0,393.3L800.0,393.8L800.5,393.8L800.5,393.3L801.0,393.3L801.0,393.3L801.5,393.3L801.5,393.3L802.0,393.3L802.0,393.3L802.5,393.3L802.5,393.3L803.0,393.3L803.0,394.3L803.5,394.3L803.5,393.8L804.0,393.8L804.0,393.3L804.5,393.3L804.5,306.0L805.0,306.0L805.0,306.0L805.5,306.0L805.5,283.9L806.0,283.9L806.0,283.4L806.5,283.4L806.5,289.5L807.0,289.5L807.0,290.5L807.5,290.5L807.5,290.0L808.0,290.0L808.0,289.5L808.5,289.5L808.5,290.0L809.0,290.0L809.0,295.4L809.5,295.4L809.5,294.9L810.0,294.9L810.0,294.4L810.5,294.4L810.5,294.4L811.0,294.4L811.0,298.1L811.5,298.1L811.5,299.1L812.0,299.1L812.0,299.6L812.5,299.6L812.5,301.7L813.0,301.7L813.0,300.2L813.5,300.2L813.5,291.5L814.0,291.5L814.0,292.5L814.5,292.5L814.5,292.0L815.0,292.0L815.0,290.0L815.5,290.0L815.5,291.0L816.0,291.0L816.0,288.0L816.5,288.0L816.5,288.0L817.0,288.0L817.0,288.5L817.5,288.5L817.5,288.0L818.0,288.0L818.0,431.3Z" fill="#d80000"/><line x1="413.5" y1="79" x2="413.5" y2="432.3" stroke="#6e6e6e" stroke-width="1.8"/><line x1="413" y1="431.8" x2="831" y2="431.8" stroke="#6e6e6e" stroke-width="1.8"/><line x1="410" y1="421.2" x2="414" y2="421.2" stroke="#999" stroke-width="0.8"/><line x1="410" y1="411.0" x2="414" y2="411.0" stroke="#999" stroke-width="0.8"/><line x1="410" y1="400.9" x2="414" y2="400.9" stroke="#999" stroke-width="0.8"/><line x1="410" y1="390.7" x2="414" y2="390.7" stroke="#999" stroke-width="0.8"/><line x1="410" y1="380.6" x2="414" y2="380.6" stroke="#999" stroke-width="0.8"/><line x1="410" y1="370.4" x2="414" y2="370.4" stroke="#999" stroke-width="0.8"/><line x1="410" y1="360.2" x2="414" y2="360.2" stroke="#999" stroke-width="0.8"/><line x1="410" y1="350.1" x2="414" y2="350.1" stroke="#999" stroke-width="0.8"/><line x1="410" y1="339.9" x2="414" y2="339.9" stroke="#999" stroke-width="0.8"/><line x1="410" y1="329.8" x2="414" y2="329.8" stroke="#999" stroke-width="0.8"/><line x1="410" y1="319.6" x2="414" y2="319.6" stroke="#999" stroke-width="0.8"/><line x1="410" y1="309.5" x2="414" y2="309.5" stroke="#999" stroke-width="0.8"/><line x1="410" y1="299.4" x2="414" y2="299.4" stroke="#999" stroke-width="0.8"/><line x1="410" y1="289.2" x2="414" y2="289.2" stroke="#999" stroke-width="0.8"/><line x1="410" y1="279.1" x2="414" y2="279.1" stroke="#999" stroke-width="0.8"/><line x1="410" y1="268.9" x2="414" y2="268.9" stroke="#999" stroke-width="0.8"/><line x1="410" y1="258.8" x2="414" y2="258.8" stroke="#999" stroke-width="0.8"/><line x1="410" y1="248.6" x2="414" y2="248.6" stroke="#999" stroke-width="0.8"/><line x1="410" y1="238.5" x2="414" y2="238.5" stroke="#999" stroke-width="0.8"/><line x1="410" y1="228.3" x2="414" y2="228.3" stroke="#999" stroke-width="0.8"/><line x1="410" y1="218.2" x2="414" y2="218.2" stroke="#999" stroke-width="0.8"/><line x1="410" y1="208.0" x2="414" y2="208.0" stroke="#999" stroke-width="0.8"/><line x1="410" y1="197.9" x2="414" y2="197.9" stroke="#999" stroke-width="0.8"/><line x1="410" y1="187.7" x2="414" y2="187.7" stroke="#999" stroke-width="0.8"/><line x1="410" y1="177.6" x2="414" y2="177.6" stroke="#999" stroke-width="0.8"/><line x1="410" y1="167.4" x2="414" y2="167.4" stroke="#999" stroke-width="0.8"/><line x1="410" y1="157.2" x2="414" y2="157.2" stroke="#999" stroke-width="0.8"/><line x1="410" y1="147.1" x2="414" y2="147.1" stroke="#999" stroke-width="0.8"/><line x1="410" y1="137.0" x2="414" y2="137.0" stroke="#999" stroke-width="0.8"/><line x1="410" y1="126.8" x2="414" y2="126.8" stroke="#999" stroke-width="0.8"/><line x1="410" y1="116.6" x2="414" y2="116.6" stroke="#999" stroke-width="0.8"/><line x1="410" y1="106.5" x2="414" y2="106.5" stroke="#999" stroke-width="0.8"/><line x1="410" y1="96.4" x2="414" y2="96.4" stroke="#999" stroke-width="0.8"/><line x1="410" y1="86.2" x2="414" y2="86.2" stroke="#999" stroke-width="0.8"/><line x1="410.5" y1="431.3" x2="412.5" y2="431.3" stroke="#c4c4c4" stroke-width="0.6"/><line x1="410.5" y1="428.8" x2="412.5" y2="428.8" stroke="#c4c4c4" stroke-width="0.6"/><line x1="410.5" y1="426.2" x2="412.5" y2="426.2" stroke="#c4c4c4" stroke-width="0.6"/><line x1="410.5" y1="423.7" x2="412.5" y2="423.7" stroke="#c4c4c4" stroke-width="0.6"/><line x1="410.5" y1="421.1" x2="412.5" y2="421.1" stroke="#c4c4c4" stroke-width="0.6"/><line x1="410.5" y1="418.6" x2="412.5" y2="418.6" stroke="#c4c4c4" stroke-width="0.6"/><line x1="410.5" y1="416.1" x2="412.5" y2="416.1" stroke="#c4c4c4" stroke-width="0.6"/><line x1="410.5" y1="413.5" x2="412.5" y2="413.5" stroke="#c4c4c4" stroke-width="0.6"/><line x1="410.5" y1="411.0" x2="412.5" y2="411.0" stroke="#c4c4c4" stroke-width="0.6"/><line x1="410.5" y1="408.5" x2="412.5" y2="408.5" stroke="#c4c4c4" stroke-width="0.6"/><line x1="410.5" y1="405.9" x2="412.5" y2="405.9" stroke="#c4c4c4" stroke-width="0.6"/><line x1="410.5" y1="403.4" x2="412.5" y2="403.4" stroke="#c4c4c4" stroke-width="0.6"/><line x1="410.5" y1="400.8" x2="412.5" y2="400.8" stroke="#c4c4c4" stroke-width="0.6"/><line x1="410.5" y1="398.3" x2="412.5" y2="398.3" stroke="#c4c4c4" stroke-width="0.6"/><line x1="410.5" y1="395.8" x2="412.5" y2="395.8" stroke="#c4c4c4" stroke-width="0.6"/><line x1="410.5" y1="393.2" x2="412.5" y2="393.2" stroke="#c4c4c4" stroke-width="0.6"/><line x1="410.5" y1="390.7" x2="412.5" y2="390.7" stroke="#c4c4c4" stroke-width="0.6"/><line x1="410.5" y1="388.2" x2="412.5" y2="388.2" stroke="#c4c4c4" stroke-width="0.6"/><line x1="410.5" y1="385.6" x2="412.5" y2="385.6" stroke="#c4c4c4" stroke-width="0.6"/><line x1="410.5" y1="383.1" x2="412.5" y2="383.1" stroke="#c4c4c4" stroke-width="0.6"/><line x1="410.5" y1="380.5" x2="412.5" y2="380.5" stroke="#c4c4c4" stroke-width="0.6"/><line x1="410.5" y1="378.0" x2="412.5" y2="378.0" stroke="#c4c4c4" stroke-width="0.6"/><line x1="410.5" y1="375.5" x2="412.5" y2="375.5" stroke="#c4c4c4" stroke-width="0.6"/><line x1="410.5" y1="372.9" x2="412.5" y2="372.9" stroke="#c4c4c4" stroke-width="0.6"/><line x1="410.5" y1="370.4" x2="412.5" y2="370.4" stroke="#c4c4c4" stroke-width="0.6"/><line x1="410.5" y1="367.9" x2="412.5" y2="367.9" stroke="#c4c4c4" stroke-width="0.6"/><line x1="410.5" y1="365.3" x2="412.5" y2="365.3" stroke="#c4c4c4" stroke-width="0.6"/><line x1="410.5" y1="362.8" x2="412.5" y2="362.8" stroke="#c4c4c4" stroke-width="0.6"/><line x1="410.5" y1="360.2" x2="412.5" y2="360.2" stroke="#c4c4c4" stroke-width="0.6"/><line x1="410.5" y1="357.7" x2="412.5" y2="357.7" stroke="#c4c4c4" stroke-width="0.6"/><line x1="410.5" y1="355.2" x2="412.5" y2="355.2" stroke="#c4c4c4" stroke-width="0.6"/><line x1="410.5" y1="352.6" x2="412.5" y2="352.6" stroke="#c4c4c4" stroke-width="0.6"/><line x1="410.5" y1="350.1" x2="412.5" y2="350.1" stroke="#c4c4c4" stroke-width="0.6"/><line x1="410.5" y1="347.6" x2="412.5" y2="347.6" stroke="#c4c4c4" stroke-width="0.6"/><line x1="410.5" y1="345.0" x2="412.5" y2="345.0" stroke="#c4c4c4" stroke-width="0.6"/><line x1="410.5" y1="342.5" x2="412.5" y2="342.5" stroke="#c4c4c4" stroke-width="0.6"/><line x1="410.5" y1="339.9" x2="412.5" y2="339.9" stroke="#c4c4c4" stroke-width="0.6"/><line x1="410.5" y1="337.4" x2="412.5" y2="337.4" stroke="#c4c4c4" stroke-width="0.6"/><line x1="410.5" y1="334.9" x2="412.5" y2="334.9" stroke="#c4c4c4" stroke-width="0.6"/><line x1="410.5" y1="332.3" x2="412.5" y2="332.3" stroke="#c4c4c4" stroke-width="0.6"/><line x1="410.5" y1="329.8" x2="412.5" y2="329.8" stroke="#c4c4c4" stroke-width="0.6"/><line x1="410.5" y1="327.3" x2="412.5" y2="327.3" stroke="#c4c4c4" stroke-width="0.6"/><line x1="410.5" y1="324.7" x2="412.5" y2="324.7" stroke="#c4c4c4" stroke-width="0.6"/><line x1="410.5" y1="322.2" x2="412.5" y2="322.2" stroke="#c4c4c4" stroke-width="0.6"/><line x1="410.5" y1="319.6" x2="412.5" y2="319.6" stroke="#c4c4c4" stroke-width="0.6"/><line x1="410.5" y1="317.1" x2="412.5" y2="317.1" stroke="#c4c4c4" stroke-width="0.6"/><line x1="410.5" y1="314.6" x2="412.5" y2="314.6" stroke="#c4c4c4" stroke-width="0.6"/><line x1="410.5" y1="312.0" x2="412.5" y2="312.0" stroke="#c4c4c4" stroke-width="0.6"/><line x1="410.5" y1="309.5" x2="412.5" y2="309.5" stroke="#c4c4c4" stroke-width="0.6"/><line x1="410.5" y1="307.0" x2="412.5" y2="307.0" stroke="#c4c4c4" stroke-width="0.6"/><line x1="410.5" y1="304.4" x2="412.5" y2="304.4" stroke="#c4c4c4" stroke-width="0.6"/><line x1="410.5" y1="301.9" x2="412.5" y2="301.9" stroke="#c4c4c4" stroke-width="0.6"/><line x1="410.5" y1="299.3" x2="412.5" y2="299.3" stroke="#c4c4c4" stroke-width="0.6"/><line x1="410.5" y1="296.8" x2="412.5" y2="296.8" stroke="#c4c4c4" stroke-width="0.6"/><line x1="410.5" y1="294.3" x2="412.5" y2="294.3" stroke="#c4c4c4" stroke-width="0.6"/><line x1="410.5" y1="291.7" x2="412.5" y2="291.7" stroke="#c4c4c4" stroke-width="0.6"/><line x1="410.5" y1="289.2" x2="412.5" y2="289.2" stroke="#c4c4c4" stroke-width="0.6"/><line x1="410.5" y1="286.7" x2="412.5" y2="286.7" stroke="#c4c4c4" stroke-width="0.6"/><line x1="410.5" y1="284.1" x2="412.5" y2="284.1" stroke="#c4c4c4" stroke-width="0.6"/><line x1="410.5" y1="281.6" x2="412.5" y2="281.6" stroke="#c4c4c4" stroke-width="0.6"/><line x1="410.5" y1="279.0" x2="412.5" y2="279.0" stroke="#c4c4c4" stroke-width="0.6"/><line x1="410.5" y1="276.5" x2="412.5" y2="276.5" stroke="#c4c4c4" stroke-width="0.6"/><line x1="410.5" y1="274.0" x2="412.5" y2="274.0" stroke="#c4c4c4" stroke-width="0.6"/><line x1="410.5" y1="271.4" x2="412.5" y2="271.4" stroke="#c4c4c4" stroke-width="0.6"/><line x1="410.5" y1="268.9" x2="412.5" y2="268.9" stroke="#c4c4c4" stroke-width="0.6"/><line x1="410.5" y1="266.4" x2="412.5" y2="266.4" stroke="#c4c4c4" stroke-width="0.6"/><line x1="410.5" y1="263.8" x2="412.5" y2="263.8" stroke="#c4c4c4" stroke-width="0.6"/><line x1="410.5" y1="261.3" x2="412.5" y2="261.3" stroke="#c4c4c4" stroke-width="0.6"/><line x1="410.5" y1="258.7" x2="412.5" y2="258.7" stroke="#c4c4c4" stroke-width="0.6"/><line x1="410.5" y1="256.2" x2="412.5" y2="256.2" stroke="#c4c4c4" stroke-width="0.6"/><line x1="410.5" y1="253.7" x2="412.5" y2="253.7" stroke="#c4c4c4" stroke-width="0.6"/><line x1="410.5" y1="251.1" x2="412.5" y2="251.1" stroke="#c4c4c4" stroke-width="0.6"/><line x1="410.5" y1="248.6" x2="412.5" y2="248.6" stroke="#c4c4c4" stroke-width="0.6"/><line x1="410.5" y1="246.1" x2="412.5" y2="246.1" stroke="#c4c4c4" stroke-width="0.6"/><line x1="410.5" y1="243.5" x2="412.5" y2="243.5" stroke="#c4c4c4" stroke-width="0.6"/><line x1="410.5" y1="241.0" x2="412.5" y2="241.0" stroke="#c4c4c4" stroke-width="0.6"/><line x1="410.5" y1="238.4" x2="412.5" y2="238.4" stroke="#c4c4c4" stroke-width="0.6"/><line x1="410.5" y1="235.9" x2="412.5" y2="235.9" stroke="#c4c4c4" stroke-width="0.6"/><line x1="410.5" y1="233.4" x2="412.5" y2="233.4" stroke="#c4c4c4" stroke-width="0.6"/><line x1="410.5" y1="230.8" x2="412.5" y2="230.8" stroke="#c4c4c4" stroke-width="0.6"/><line x1="410.5" y1="228.3" x2="412.5" y2="228.3" stroke="#c4c4c4" stroke-width="0.6"/><line x1="410.5" y1="225.8" x2="412.5" y2="225.8" stroke="#c4c4c4" stroke-width="0.6"/><line x1="410.5" y1="223.2" x2="412.5" y2="223.2" stroke="#c4c4c4" stroke-width="0.6"/><line x1="410.5" y1="220.7" x2="412.5" y2="220.7" stroke="#c4c4c4" stroke-width="0.6"/><line x1="410.5" y1="218.1" x2="412.5" y2="218.1" stroke="#c4c4c4" stroke-width="0.6"/><line x1="410.5" y1="215.6" x2="412.5" y2="215.6" stroke="#c4c4c4" stroke-width="0.6"/><line x1="410.5" y1="213.1" x2="412.5" y2="213.1" stroke="#c4c4c4" stroke-width="0.6"/><line x1="410.5" y1="210.5" x2="412.5" y2="210.5" stroke="#c4c4c4" stroke-width="0.6"/><line x1="410.5" y1="208.0" x2="412.5" y2="208.0" stroke="#c4c4c4" stroke-width="0.6"/><line x1="410.5" y1="205.5" x2="412.5" y2="205.5" stroke="#c4c4c4" stroke-width="0.6"/><line x1="410.5" y1="202.9" x2="412.5" y2="202.9" stroke="#c4c4c4" stroke-width="0.6"/><line x1="410.5" y1="200.4" x2="412.5" y2="200.4" stroke="#c4c4c4" stroke-width="0.6"/><line x1="410.5" y1="197.8" x2="412.5" y2="197.8" stroke="#c4c4c4" stroke-width="0.6"/><line x1="410.5" y1="195.3" x2="412.5" y2="195.3" stroke="#c4c4c4" stroke-width="0.6"/><line x1="410.5" y1="192.8" x2="412.5" y2="192.8" stroke="#c4c4c4" stroke-width="0.6"/><line x1="410.5" y1="190.2" x2="412.5" y2="190.2" stroke="#c4c4c4" stroke-width="0.6"/><line x1="410.5" y1="187.7" x2="412.5" y2="187.7" stroke="#c4c4c4" stroke-width="0.6"/><line x1="410.5" y1="185.2" x2="412.5" y2="185.2" stroke="#c4c4c4" stroke-width="0.6"/><line x1="410.5" y1="182.6" x2="412.5" y2="182.6" stroke="#c4c4c4" stroke-width="0.6"/><line x1="410.5" y1="180.1" x2="412.5" y2="180.1" stroke="#c4c4c4" stroke-width="0.6"/><line x1="410.5" y1="177.5" x2="412.5" y2="177.5" stroke="#c4c4c4" stroke-width="0.6"/><line x1="410.5" y1="175.0" x2="412.5" y2="175.0" stroke="#c4c4c4" stroke-width="0.6"/><line x1="410.5" y1="172.5" x2="412.5" y2="172.5" stroke="#c4c4c4" stroke-width="0.6"/><line x1="410.5" y1="169.9" x2="412.5" y2="169.9" stroke="#c4c4c4" stroke-width="0.6"/><line x1="410.5" y1="167.4" x2="412.5" y2="167.4" stroke="#c4c4c4" stroke-width="0.6"/><line x1="410.5" y1="164.9" x2="412.5" y2="164.9" stroke="#c4c4c4" stroke-width="0.6"/><line x1="410.5" y1="162.3" x2="412.5" y2="162.3" stroke="#c4c4c4" stroke-width="0.6"/><line x1="410.5" y1="159.8" x2="412.5" y2="159.8" stroke="#c4c4c4" stroke-width="0.6"/><line x1="410.5" y1="157.2" x2="412.5" y2="157.2" stroke="#c4c4c4" stroke-width="0.6"/><line x1="410.5" y1="154.7" x2="412.5" y2="154.7" stroke="#c4c4c4" stroke-width="0.6"/><line x1="410.5" y1="152.2" x2="412.5" y2="152.2" stroke="#c4c4c4" stroke-width="0.6"/><line x1="410.5" y1="149.6" x2="412.5" y2="149.6" stroke="#c4c4c4" stroke-width="0.6"/><line x1="410.5" y1="147.1" x2="412.5" y2="147.1" stroke="#c4c4c4" stroke-width="0.6"/><line x1="410.5" y1="144.6" x2="412.5" y2="144.6" stroke="#c4c4c4" stroke-width="0.6"/><line x1="410.5" y1="142.0" x2="412.5" y2="142.0" stroke="#c4c4c4" stroke-width="0.6"/><line x1="410.5" y1="139.5" x2="412.5" y2="139.5" stroke="#c4c4c4" stroke-width="0.6"/><line x1="410.5" y1="136.9" x2="412.5" y2="136.9" stroke="#c4c4c4" stroke-width="0.6"/><line x1="410.5" y1="134.4" x2="412.5" y2="134.4" stroke="#c4c4c4" stroke-width="0.6"/><line x1="410.5" y1="131.9" x2="412.5" y2="131.9" stroke="#c4c4c4" stroke-width="0.6"/><line x1="410.5" y1="129.3" x2="412.5" y2="129.3" stroke="#c4c4c4" stroke-width="0.6"/><line x1="410.5" y1="126.8" x2="412.5" y2="126.8" stroke="#c4c4c4" stroke-width="0.6"/><line x1="410.5" y1="124.3" x2="412.5" y2="124.3" stroke="#c4c4c4" stroke-width="0.6"/><line x1="410.5" y1="121.7" x2="412.5" y2="121.7" stroke="#c4c4c4" stroke-width="0.6"/><line x1="410.5" y1="119.2" x2="412.5" y2="119.2" stroke="#c4c4c4" stroke-width="0.6"/><line x1="410.5" y1="116.6" x2="412.5" y2="116.6" stroke="#c4c4c4" stroke-width="0.6"/><line x1="410.5" y1="114.1" x2="412.5" y2="114.1" stroke="#c4c4c4" stroke-width="0.6"/><line x1="410.5" y1="111.6" x2="412.5" y2="111.6" stroke="#c4c4c4" stroke-width="0.6"/><line x1="410.5" y1="109.0" x2="412.5" y2="109.0" stroke="#c4c4c4" stroke-width="0.6"/><line x1="410.5" y1="106.5" x2="412.5" y2="106.5" stroke="#c4c4c4" stroke-width="0.6"/><line x1="410.5" y1="104.0" x2="412.5" y2="104.0" stroke="#c4c4c4" stroke-width="0.6"/><line x1="410.5" y1="101.4" x2="412.5" y2="101.4" stroke="#c4c4c4" stroke-width="0.6"/><line x1="410.5" y1="98.9" x2="412.5" y2="98.9" stroke="#c4c4c4" stroke-width="0.6"/><line x1="410.5" y1="96.3" x2="412.5" y2="96.3" stroke="#c4c4c4" stroke-width="0.6"/><line x1="410.5" y1="93.8" x2="412.5" y2="93.8" stroke="#c4c4c4" stroke-width="0.6"/><line x1="410.5" y1="91.3" x2="412.5" y2="91.3" stroke="#c4c4c4" stroke-width="0.6"/><line x1="410.5" y1="88.7" x2="412.5" y2="88.7" stroke="#c4c4c4" stroke-width="0.6"/><line x1="410.5" y1="86.2" x2="412.5" y2="86.2" stroke="#c4c4c4" stroke-width="0.6"/><line x1="410.5" y1="83.7" x2="412.5" y2="83.7" stroke="#c4c4c4" stroke-width="0.6"/><line x1="410.5" y1="81.1" x2="412.5" y2="81.1" stroke="#c4c4c4" stroke-width="0.6"/><line x1="414.8" y1="432.3" x2="414.8" y2="435.3" stroke="#888" stroke-width="0.8"/><line x1="477.7" y1="432.3" x2="477.7" y2="435.3" stroke="#888" stroke-width="0.8"/><line x1="540.6" y1="432.3" x2="540.6" y2="435.3" stroke="#888" stroke-width="0.8"/><line x1="603.5" y1="432.3" x2="603.5" y2="435.3" stroke="#888" stroke-width="0.8"/><line x1="666.4" y1="432.3" x2="666.4" y2="435.3" stroke="#888" stroke-width="0.8"/><line x1="729.3" y1="432.3" x2="729.3" y2="435.3" stroke="#888" stroke-width="0.8"/><line x1="792.2" y1="432.3" x2="792.2" y2="435.3" stroke="#888" stroke-width="0.8"/></svg>
<span class="t" style="left:395.54px;top:417.37px;font-size:9px;line-height:9px;color:#34344a;transform:scaleX(0.9000);-webkit-text-stroke:0.12px #34344a">0.1</span>
<span class="t" style="left:395.54px;top:407.22px;font-size:9px;line-height:9px;color:#34344a;transform:scaleX(0.9000);-webkit-text-stroke:0.12px #34344a">0.2</span>
<span class="t" style="left:395.54px;top:397.07px;font-size:9px;line-height:9px;color:#34344a;transform:scaleX(0.9000);-webkit-text-stroke:0.12px #34344a">0.3</span>
<span class="t" style="left:395.54px;top:386.92px;font-size:9px;line-height:9px;color:#34344a;transform:scaleX(0.9000);-webkit-text-stroke:0.12px #34344a">0.4</span>
<span class="t" style="left:395.54px;top:376.77px;font-size:9px;line-height:9px;color:#34344a;transform:scaleX(0.9000);-webkit-text-stroke:0.12px #34344a">0.5</span>
<span class="t" style="left:395.54px;top:366.62px;font-size:9px;line-height:9px;color:#34344a;transform:scaleX(0.9000);-webkit-text-stroke:0.12px #34344a">0.6</span>
<span class="t" style="left:395.54px;top:356.47px;font-size:9px;line-height:9px;color:#34344a;transform:scaleX(0.9000);-webkit-text-stroke:0.12px #34344a">0.7</span>
<span class="t" style="left:395.54px;top:346.32px;font-size:9px;line-height:9px;color:#34344a;transform:scaleX(0.9000);-webkit-text-stroke:0.12px #34344a">0.8</span>
<span class="t" style="left:395.54px;top:336.17px;font-size:9px;line-height:9px;color:#34344a;transform:scaleX(0.9000);-webkit-text-stroke:0.12px #34344a">0.9</span>
<span class="t" style="left:402.30px;top:326.02px;font-size:9px;line-height:9px;color:#34344a;transform:scaleX(0.9000);-webkit-text-stroke:0.12px #34344a">1</span>
<span class="t" style="left:395.54px;top:315.87px;font-size:9px;line-height:9px;color:#34344a;transform:scaleX(0.9000);-webkit-text-stroke:0.12px #34344a">1.1</span>
<span class="t" style="left:395.54px;top:305.72px;font-size:9px;line-height:9px;color:#34344a;transform:scaleX(0.9000);-webkit-text-stroke:0.12px #34344a">1.2</span>
<span class="t" style="left:395.54px;top:295.57px;font-size:9px;line-height:9px;color:#34344a;transform:scaleX(0.9000);-webkit-text-stroke:0.12px #34344a">1.3</span>
<span class="t" style="left:395.54px;top:285.42px;font-size:9px;line-height:9px;color:#34344a;transform:scaleX(0.9000);-webkit-text-stroke:0.12px #34344a">1.4</span>
<span class="t" style="left:395.54px;top:275.27px;font-size:9px;line-height:9px;color:#34344a;transform:scaleX(0.9000);-webkit-text-stroke:0.12px #34344a">1.5</span>
<span class="t" style="left:395.54px;top:265.12px;font-size:9px;line-height:9px;color:#34344a;transform:scaleX(0.9000);-webkit-text-stroke:0.12px #34344a">1.6</span>
<span class="t" style="left:395.54px;top:254.97px;font-size:9px;line-height:9px;color:#34344a;transform:scaleX(0.9000);-webkit-text-stroke:0.12px #34344a">1.7</span>
<span class="t" style="left:395.54px;top:244.82px;font-size:9px;line-height:9px;color:#34344a;transform:scaleX(0.9000);-webkit-text-stroke:0.12px #34344a">1.8</span>
<span class="t" style="left:395.54px;top:234.67px;font-size:9px;line-height:9px;color:#34344a;transform:scaleX(0.9000);-webkit-text-stroke:0.12px #34344a">1.9</span>
<span class="t" style="left:402.30px;top:224.52px;font-size:9px;line-height:9px;color:#34344a;transform:scaleX(0.9000);-webkit-text-stroke:0.12px #34344a">2</span>
<span class="t" style="left:395.54px;top:214.37px;font-size:9px;line-height:9px;color:#34344a;transform:scaleX(0.9000);-webkit-text-stroke:0.12px #34344a">2.1</span>
<span class="t" style="left:395.54px;top:204.22px;font-size:9px;line-height:9px;color:#34344a;transform:scaleX(0.9000);-webkit-text-stroke:0.12px #34344a">2.2</span>
<span class="t" style="left:395.54px;top:194.07px;font-size:9px;line-height:9px;color:#34344a;transform:scaleX(0.9000);-webkit-text-stroke:0.12px #34344a">2.3</span>
<span class="t" style="left:395.54px;top:183.92px;font-size:9px;line-height:9px;color:#34344a;transform:scaleX(0.9000);-webkit-text-stroke:0.12px #34344a">2.4</span>
<span class="t" style="left:395.54px;top:173.77px;font-size:9px;line-height:9px;color:#34344a;transform:scaleX(0.9000);-webkit-text-stroke:0.12px #34344a">2.5</span>
<span class="t" style="left:395.54px;top:163.62px;font-size:9px;line-height:9px;color:#34344a;transform:scaleX(0.9000);-webkit-text-stroke:0.12px #34344a">2.6</span>
<span class="t" style="left:395.54px;top:153.47px;font-size:9px;line-height:9px;color:#34344a;transform:scaleX(0.9000);-webkit-text-stroke:0.12px #34344a">2.7</span>
<span class="t" style="left:395.54px;top:143.32px;font-size:9px;line-height:9px;color:#34344a;transform:scaleX(0.9000);-webkit-text-stroke:0.12px #34344a">2.8</span>
<span class="t" style="left:395.54px;top:133.17px;font-size:9px;line-height:9px;color:#34344a;transform:scaleX(0.9000);-webkit-text-stroke:0.12px #34344a">2.9</span>
<span class="t" style="left:402.30px;top:123.02px;font-size:9px;line-height:9px;color:#34344a;transform:scaleX(0.9000);-webkit-text-stroke:0.12px #34344a">3</span>
<span class="t" style="left:395.54px;top:112.87px;font-size:9px;line-height:9px;color:#34344a;transform:scaleX(0.9000);-webkit-text-stroke:0.12px #34344a">3.1</span>
<span class="t" style="left:395.54px;top:102.72px;font-size:9px;line-height:9px;color:#34344a;transform:scaleX(0.9000);-webkit-text-stroke:0.12px #34344a">3.2</span>
<span class="t" style="left:395.54px;top:92.57px;font-size:9px;line-height:9px;color:#34344a;transform:scaleX(0.9000);-webkit-text-stroke:0.12px #34344a">3.3</span>
<span class="t" style="left:395.54px;top:82.42px;font-size:9px;line-height:9px;color:#34344a;transform:scaleX(0.9000);-webkit-text-stroke:0.12px #34344a">3.4</span>
<span class="t" style="left:404.05px;top:436.82px;font-size:9px;line-height:9px;color:#34344a;transform:scaleX(0.9547);-webkit-text-stroke:0.12px #34344a">00:00</span>
<span class="t" style="left:393.10px;top:446.42px;font-size:9px;line-height:9px;color:#34344a;transform:scaleX(0.9636);-webkit-text-stroke:0.12px #34344a">10/02/2014</span>
<span class="t" style="left:466.95px;top:436.82px;font-size:9px;line-height:9px;color:#34344a;transform:scaleX(0.9547);-webkit-text-stroke:0.12px #34344a">16:00</span>
<span class="t" style="left:456.00px;top:446.42px;font-size:9px;line-height:9px;color:#34344a;transform:scaleX(0.9781);-webkit-text-stroke:0.12px #34344a">11/02/2014</span>
<span class="t" style="left:529.85px;top:436.82px;font-size:9px;line-height:9px;color:#34344a;transform:scaleX(0.9547);-webkit-text-stroke:0.12px #34344a">08:00</span>
<span class="t" style="left:518.90px;top:446.42px;font-size:9px;line-height:9px;color:#34344a;transform:scaleX(0.9636);-webkit-text-stroke:0.12px #34344a">13/02/2014</span>
<span class="t" style="left:592.75px;top:436.82px;font-size:9px;line-height:9px;color:#34344a;transform:scaleX(0.9547);-webkit-text-stroke:0.12px #34344a">00:00</span>
<span class="t" style="left:581.80px;top:446.42px;font-size:9px;line-height:9px;color:#34344a;transform:scaleX(0.9636);-webkit-text-stroke:0.12px #34344a">15/02/2014</span>
<span class="t" style="left:655.65px;top:436.82px;font-size:9px;line-height:9px;color:#34344a;transform:scaleX(0.9547);-webkit-text-stroke:0.12px #34344a">16:00</span>
<span class="t" style="left:644.70px;top:446.42px;font-size:9px;line-height:9px;color:#34344a;transform:scaleX(0.9636);-webkit-text-stroke:0.12px #34344a">16/02/2014</span>
<span class="t" style="left:718.55px;top:436.82px;font-size:9px;line-height:9px;color:#34344a;transform:scaleX(0.9547);-webkit-text-stroke:0.12px #34344a">08:00</span>
<span class="t" style="left:707.60px;top:446.42px;font-size:9px;line-height:9px;color:#34344a;transform:scaleX(0.9636);-webkit-text-stroke:0.12px #34344a">18/02/2014</span>
<span class="t" style="left:781.45px;top:436.82px;font-size:9px;line-height:9px;color:#34344a;transform:scaleX(0.9547);-webkit-text-stroke:0.12px #34344a">00:00</span>
<span class="t" style="left:770.50px;top:446.42px;font-size:9px;line-height:9px;color:#34344a;transform:scaleX(0.9636);-webkit-text-stroke:0.12px #34344a">20/02/2014</span>
<div style="left:849px;top:96.5px;width:86.5px;height:19px;background:#2a2a2a"></div>
<div style="left:846.5px;top:94.3px;width:87.5px;height:19.7px;background:#fff;border:1px solid #333;box-sizing:border-box"></div>
<div style="left:850.5px;top:96.3px;width:14.5px;height:6.3px;background:#d80000;border:0.5px solid #333;box-sizing:border-box"></div>
<div style="left:850.5px;top:105.5px;width:14.5px;height:6.3px;background:#e08818;border:0.5px solid #333;box-sizing:border-box"></div>
<span class="t" style="left:869.20px;top:96.34px;font-size:8px;line-height:8px;color:#2a2438;transform:scaleX(1.0666);">Sym Office kWh</span>
<span class="t" style="left:869.20px;top:105.54px;font-size:8px;line-height:8px;color:#2a2438;transform:scaleX(0.9751);">NFE Office</span>
</body></html>
